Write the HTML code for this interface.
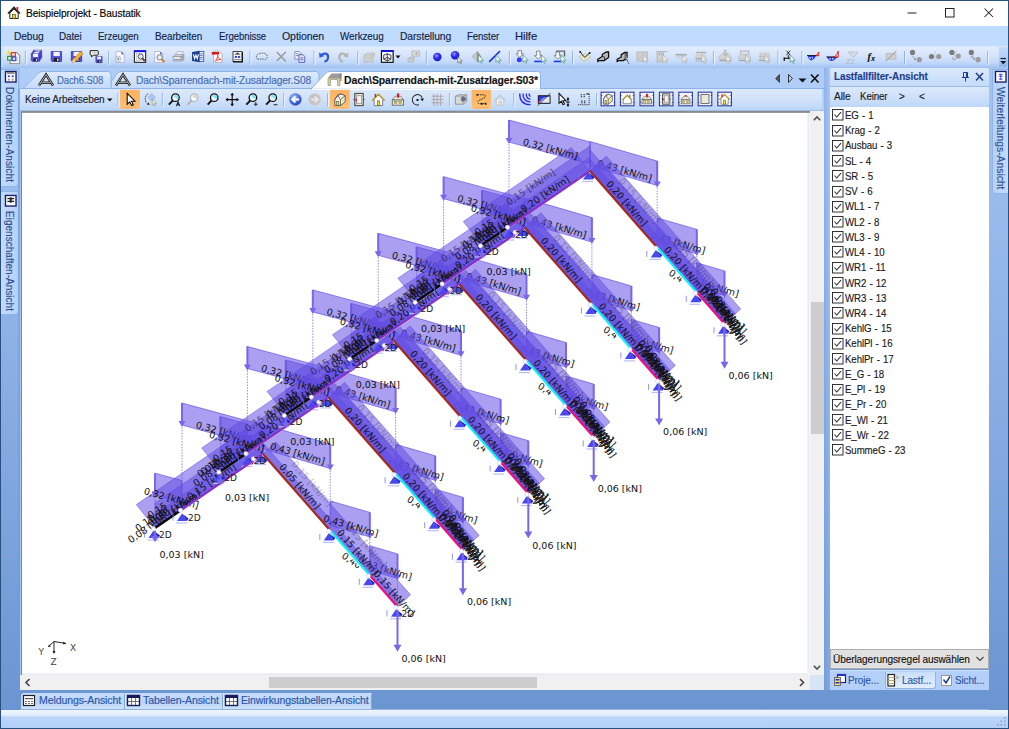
<!DOCTYPE html>
<html><head><meta charset="utf-8"><title>Beispielprojekt - Baustatik</title>
<style>
html,body{margin:0;padding:0;background:#fff;}
#root{position:relative;width:1009px;height:729px;overflow:hidden;font-family:"Liberation Sans",sans-serif;}
.t{position:absolute;white-space:nowrap;transform-origin:0 0;display:inline-block;}
svg{overflow:visible}
svg text{font-family:"Liberation Sans",sans-serif;}
svg.dr text{font-family:"DejaVu Sans","Liberation Sans",sans-serif;}
</style></head><body><div id="root">
<div style="position:absolute;left:0px;top:0px;width:1009px;height:729px;background:#27507f;"></div>
<div style="position:absolute;left:1px;top:1px;width:1007px;height:25px;background:#ffffff;"></div>
<div style="position:absolute;left:1px;top:26px;width:1007px;height:20px;background:#bfdbff;"></div>
<div style="position:absolute;left:1px;top:46px;width:1007px;height:22px;background:linear-gradient(#d9e7fb 0%,#cfe0f9 45%,#b7d2f6 100%);"></div>
<div style="position:absolute;left:1px;top:67px;width:1007px;height:1px;background:#a3c2ee;"></div>
<div style="position:absolute;left:1px;top:68px;width:1007px;height:642px;background:linear-gradient(#a9c8f4 0%,#8db1e6 45%,#6b95d1 100%);"></div>
<div style="position:absolute;left:1px;top:710px;width:1007px;height:18px;background:linear-gradient(#eef5fe 0%,#dfebfc 30%,#bbd5f9 40%,#b2cff8 100%);"></div>
<div style="position:absolute;left:1px;top:709px;width:1007px;height:1px;background:#8fb3e3;"></div>
<span class="t" style="left:26.0px;top:9.1px;font-size:10.3px;line-height:10.3px;color:#000;letter-spacing:-0.1px;-webkit-text-stroke:0.14px #000;transform:scaleX(0.990);">Beispielprojekt - Baustatik</span>
<svg style="position:absolute;left:900px;top:1px" width="108" height="25" viewBox="0 0 108 25"><path d="M7.500 12H16.500" stroke="#222" stroke-width="1" fill="none"/><rect x="45.500" y="7.500" width="8.500" height="8.500" stroke="#222" stroke-width="1" fill="none"/><path d="M84.500 7.500L93 16M93 7.500L84.500 16" stroke="#222" stroke-width="1.050" fill="none"/></svg>
<svg style="position:absolute;left:7px;top:6px" width="14" height="14" viewBox="0 0 14 14"><path d="M1 7.5L7 1.5L13 7.5" stroke="#222" stroke-width="1.6" fill="none"/><rect x="9.5" y="1" width="1.8" height="3.5" fill="#e02020"/><path d="M2.8 7V12.5H11.2V7L7 3Z" fill="#fffbe0" stroke="#222" stroke-width="1"/><rect x="5.6" y="8.5" width="2.8" height="4" fill="#e8d020" stroke="#333" stroke-width=".6"/></svg>
<span class="t" style="left:13.5px;top:32.1px;font-size:10.3px;line-height:10.3px;color:#15233f;letter-spacing:-0.1px;-webkit-text-stroke:0.14px #15233f;transform:scaleX(0.991);">Debug</span>
<span class="t" style="left:59.0px;top:32.1px;font-size:10.3px;line-height:10.3px;color:#15233f;letter-spacing:-0.1px;-webkit-text-stroke:0.14px #15233f;transform:scaleX(0.960);">Datei</span>
<span class="t" style="left:98.0px;top:32.1px;font-size:10.3px;line-height:10.3px;color:#15233f;letter-spacing:-0.1px;-webkit-text-stroke:0.14px #15233f;transform:scaleX(0.938);">Erzeugen</span>
<span class="t" style="left:155.0px;top:32.1px;font-size:10.3px;line-height:10.3px;color:#15233f;letter-spacing:-0.1px;-webkit-text-stroke:0.14px #15233f;transform:scaleX(0.965);">Bearbeiten</span>
<span class="t" style="left:218.5px;top:32.1px;font-size:10.3px;line-height:10.3px;color:#15233f;letter-spacing:-0.1px;-webkit-text-stroke:0.14px #15233f;transform:scaleX(0.932);">Ergebnisse</span>
<span class="t" style="left:282.0px;top:32.1px;font-size:10.3px;line-height:10.3px;color:#15233f;letter-spacing:-0.1px;-webkit-text-stroke:0.14px #15233f;transform:scaleX(1.027);">Optionen</span>
<span class="t" style="left:340.0px;top:32.1px;font-size:10.3px;line-height:10.3px;color:#15233f;letter-spacing:-0.1px;-webkit-text-stroke:0.14px #15233f;transform:scaleX(0.961);">Werkzeug</span>
<span class="t" style="left:400.0px;top:32.1px;font-size:10.3px;line-height:10.3px;color:#15233f;letter-spacing:-0.1px;-webkit-text-stroke:0.14px #15233f;transform:scaleX(1.002);">Darstellung</span>
<span class="t" style="left:467.0px;top:32.1px;font-size:10.3px;line-height:10.3px;color:#15233f;letter-spacing:-0.1px;-webkit-text-stroke:0.14px #15233f;transform:scaleX(0.938);">Fenster</span>
<span class="t" style="left:515.0px;top:32.1px;font-size:10.3px;line-height:10.3px;color:#15233f;letter-spacing:-0.1px;-webkit-text-stroke:0.14px #15233f;transform:scaleX(1.099);">Hilfe</span>
<div style="position:absolute;left:1px;top:68px;width:19px;height:642px;background:linear-gradient(#a4c4f1 0%,#8cb0e5 45%,#6b95d1 100%);"></div>
<div style="position:absolute;left:1px;top:69px;width:18px;height:118px;background:linear-gradient(90deg,#c3dafb,#b6d1f8);border:1px solid #8fb4e8;border-left:none;border-radius:0 0 4px 0;box-sizing:border-box;"></div>
<div style="position:absolute;left:1px;top:191px;width:18px;height:124px;background:linear-gradient(90deg,#c3dafb,#b6d1f8);border:1px solid #8fb4e8;border-left:none;border-radius:0 0 4px 0;box-sizing:border-box;"></div>
<svg style="position:absolute;left:4.5px;top:71px" width="11.5" height="11.5" viewBox="0 0 12 12"><rect x=".5" y=".5" width="11" height="11" fill="#fff" stroke="#1a1a6a" stroke-width="1.4"/><rect x="2" y="1.5" width="8" height="1.2" fill="#444"/><rect x="3" y="4.5" width="2" height="2" fill="#3a4ae0"/><rect x="7" y="4.5" width="2" height="2" fill="#3a4ae0"/><rect x="3" y="8" width="2" height="2" fill="#999"/><rect x="7" y="8" width="2" height="2" fill="#999"/></svg>
<svg style="position:absolute;left:4.5px;top:195px" width="11.5" height="11.5" viewBox="0 0 12 12"><rect x=".5" y=".5" width="11" height="11" fill="#fff" stroke="#1a1a6a" stroke-width="1.4"/><rect x="2.5" y="3" width="7" height="1.4" fill="#222"/><rect x="2.5" y="6" width="7" height="1.4" fill="#222"/><rect x="5" y="2.5" width="2" height="5.5" fill="#222"/></svg>
<span class="t" style="left:15px;top:87px;font-size:10.3px;line-height:11px;color:#2a4f8f;-webkit-text-stroke:0.12px #2a4f8f;transform:rotate(90deg) scaleX(0.994);">Dokumenten-Ansicht</span>
<span class="t" style="left:15px;top:211px;font-size:10.3px;line-height:11px;color:#2a4f8f;-webkit-text-stroke:0.12px #2a4f8f;transform:rotate(90deg) scaleX(0.976);">Eigenschaften-Ansicht</span>
<div style="position:absolute;left:20px;top:68px;width:805px;height:21px;background:#afcdf6;"></div>
<div style="position:absolute;left:20px;top:88px;width:805px;height:1px;background:#8eb3e8;"></div>
<div style="position:absolute;left:20px;top:89px;width:802px;height:21px;background:linear-gradient(#dce9fb 0%,#d0e1fa 50%,#bdd7f8 100%);border-radius:0 0 3px 0;"></div>
<div style="position:absolute;left:822px;top:89px;width:3px;height:22px;background:#b3cff6;"></div>
<div style="position:absolute;left:20px;top:110px;width:805px;height:1px;background:#9fbfee;"></div>
<div style="position:absolute;left:20px;top:111px;width:790px;height:564px;background:#fff;"></div>
<div style="position:absolute;left:21px;top:111px;width:789px;height:1px;background:#8a8a8a;"></div>
<div style="position:absolute;left:21px;top:112px;width:789px;height:1px;background:#9a9a9a;"></div>
<div style="position:absolute;left:18px;top:89px;width:2px;height:601px;background:rgba(110,155,225,.55);"></div>
<div style="position:absolute;left:20px;top:111px;width:1px;height:564px;background:#a9c3ea;"></div>
<div style="position:absolute;left:21px;top:111px;width:1px;height:564px;background:#858585;"></div>
<div style="position:absolute;left:807px;top:113px;width:1px;height:561px;background:#f3f3f3;"></div>
<div style="position:absolute;left:808px;top:113px;width:1px;height:561px;background:#e3ecf7;"></div>
<div style="position:absolute;left:809px;top:113px;width:1px;height:561px;background:#f6f6f6;"></div>
<div style="position:absolute;left:22px;top:673px;width:786px;height:1px;background:#f0f0f0;"></div>
<div style="position:absolute;left:22px;top:674px;width:786px;height:1px;background:#e3ecf7;"></div>
<div style="position:absolute;left:810px;top:111px;width:14px;height:564px;background:#f0f0f0;"></div>
<div style="position:absolute;left:811px;top:302px;width:13px;height:132px;background:#cdcdcd;"></div>
<svg style="position:absolute;left:810px;top:111px" width="14" height="564" viewBox="0 0 14 564"><path d="M3.800 9.300L7 6L10.200 9.300" stroke="#505050" stroke-width="1.600" fill="none"/><path d="M3.800 554.700L7 558L10.200 554.700" stroke="#505050" stroke-width="1.600" fill="none"/></svg>
<div style="position:absolute;left:20px;top:675px;width:790px;height:15px;background:#f0f0f0;"></div>
<div style="position:absolute;left:269px;top:677px;width:268px;height:11px;background:#cdcdcd;"></div>
<svg style="position:absolute;left:20px;top:675px" width="790" height="15" viewBox="0 0 790 15"><path d="M9.5 4L6 7.5L9.5 11" stroke="#444" stroke-width="1.6" fill="none"/><path d="M780 4L783.5 7.5L780 11" stroke="#444" stroke-width="1.6" fill="none"/></svg>
<div style="position:absolute;left:810px;top:675px;width:14px;height:15px;background:#d7e4f4;"></div>
<div style="position:absolute;left:824px;top:68px;width:6px;height:622px;background:linear-gradient(90deg,rgba(120,160,225,.55),rgba(170,200,245,.35));"></div>
<svg style="position:absolute;left:20px;top:68px" width="805" height="22" viewBox="0 0 805 22"><defs><linearGradient id="gtab" x1="0" y1="0" x2="0" y2="1"><stop offset="0" stop-color="#deebfc"/><stop offset="1" stop-color="#c3daf9"/></linearGradient></defs><path d="M91 14L97 5.500Q98.500 3.500 101.500 3.500H296Q299 3.500 299 6.500V20.500H91Z" fill="url(#gtab)" stroke="#8fb4e8"/><path d="M3 20.500L18.500 5Q20 3.500 23 3.500H88Q91 3.500 91 6.500V20.500Z" fill="url(#gtab)" stroke="#8fb4e8"/><path d="M291 21L305.500 5.500Q307 3.500 310 3.500H517.500Q520.500 3.500 520.500 6.500V21Z" fill="#ffffff" stroke="#8fb4e8"/><rect x="292" y="20.500" width="228" height="1.500" fill="#fff"/><g fill="none" stroke-linejoin="miter"><path d="M19 17.500L26 6.500L33 17.500M21.500 14.700H30.500" stroke="#1a1a1a" stroke-width="2.400"/><path d="M19 17.500L26 6.500L33 17.500M21.500 14.700H30.500" stroke="#c8c8c8" stroke-width=".9"/><path d="M96 17.500L103 6.500L110 17.500M98.500 14.700H107.500" stroke="#1a1a1a" stroke-width="2.400"/><path d="M96 17.500L103 6.500L110 17.500M98.500 14.700H107.500" stroke="#c8c8c8" stroke-width=".9"/></g><path d="M308 10L311.500 5.500H321L320 10Z" fill="#9a9a9a"/><path d="M308 10H320V17.500H317.500V11.500H310.500V17.500H308Z" fill="#d8cfa4" stroke="#8a8468" stroke-width=".6"/><path d="M320 10L321 5.500V13" stroke="#777" stroke-width="1" fill="none"/><path d="M759.500 6.500L755.500 10.500L759.500 14.500Z" fill="#555" stroke="#333" stroke-width=".8"/><path d="M768.500 6.500L772.500 10.500L768.500 14.500Z" fill="none" stroke="#333" stroke-width="1"/><path d="M778.500 10.500H786.500L782.500 14.500Z" fill="#111"/><path d="M791 6.500L798.500 14.500M798.500 6.500L791 14.500" stroke="#111" stroke-width="1.6" fill="none"/></svg>
<span class="t" style="left:56.5px;top:76.1px;font-size:10.3px;line-height:10.3px;color:#4169b8;letter-spacing:-0.1px;-webkit-text-stroke:0.14px #4169b8;transform:scaleX(0.921);">Dach6.S08</span>
<span class="t" style="left:136.0px;top:76.1px;font-size:10.3px;line-height:10.3px;color:#4169b8;letter-spacing:-0.1px;-webkit-text-stroke:0.14px #4169b8;transform:scaleX(0.988);">Dach\Sparrendach-mit-Zusatzlager.S08</span>
<span class="t" style="left:343.6px;top:76.1px;font-size:10.3px;line-height:10.3px;font-weight:bold;color:#111;letter-spacing:-0.1px;-webkit-text-stroke:0.14px #111;transform:scaleX(1.013);">Dach\Sparrendach-mit-Zusatzlager.S03*</span>
<span class="t" style="left:24.8px;top:95.3px;font-size:10.3px;line-height:10.3px;color:#1c1c1c;letter-spacing:-0.1px;-webkit-text-stroke:0.14px #1c1c1c;transform:scaleX(0.972);">Keine Arbeitseben</span>
<svg style="position:absolute;left:106px;top:97px" width="8" height="6" viewBox="0 0 8 6"><path d="M1 1.500H6.500L3.750 4.500Z" fill="#111"/></svg>
<div style="position:absolute;left:21px;top:693px;width:351px;height:16px;background:linear-gradient(#c6dcfb,#bad5fa 60%,#cfe2fc);border-radius:3px 0 0 0;"></div>
<div style="position:absolute;left:124px;top:694px;width:1px;height:15px;background:#7ea6de;"></div>
<div style="position:absolute;left:125px;top:694px;width:1px;height:15px;background:#e4effd;"></div>
<div style="position:absolute;left:222px;top:694px;width:1px;height:15px;background:#7ea6de;"></div>
<div style="position:absolute;left:223px;top:694px;width:1px;height:15px;background:#e4effd;"></div>
<div style="position:absolute;left:371px;top:694px;width:1px;height:15px;background:#7ea6de;"></div>
<svg style="position:absolute;left:21px;top:693px" width="352" height="16" viewBox="0 0 352 16"><rect x="2.500" y="2.500" width="11" height="10" fill="#fff" stroke="#222" stroke-width="1.2"/><rect x="4" y="5" width="8" height="1.200" fill="#555"/><path d="M4 8.500H12M4 10.500H12" stroke="#777" stroke-width="1" stroke-dasharray="2 1"/><g transform="translate(104,0)"><rect x="2.500" y="2.500" width="12" height="10" fill="#fff" stroke="#1a1a5a" stroke-width="1.400"/><rect x="3" y="3" width="11" height="2" fill="#1a1a5a"/><path d="M6.500 5V12M10.500 5V12M3 8.500H14" stroke="#555" stroke-width=".8"/></g><g transform="translate(202,0)"><rect x="2.500" y="2.500" width="12" height="10" fill="#fff" stroke="#1a1a5a" stroke-width="1.400"/><rect x="3" y="3" width="11" height="2" fill="#1a1a5a"/><path d="M6.500 5V12M10.500 5V12M3 8.500H14" stroke="#555" stroke-width=".8"/></g></svg>
<span class="t" style="left:38.7px;top:696.1px;font-size:10.3px;line-height:10.3px;color:#2a56a5;letter-spacing:-0.1px;-webkit-text-stroke:0.14px #2a56a5;transform:scaleX(1.023);">Meldungs-Ansicht</span>
<span class="t" style="left:142.8px;top:696.1px;font-size:10.3px;line-height:10.3px;color:#2a56a5;letter-spacing:-0.1px;-webkit-text-stroke:0.14px #2a56a5;transform:scaleX(1.026);">Tabellen-Ansicht</span>
<span class="t" style="left:240.6px;top:696.1px;font-size:10.3px;line-height:10.3px;color:#2a56a5;letter-spacing:-0.1px;-webkit-text-stroke:0.14px #2a56a5;transform:scaleX(1.011);">Einwirkungstabellen-Ansicht</span>
<div style="position:absolute;left:830px;top:68px;width:159px;height:19px;background:linear-gradient(#dbe8fb,#c2dafa);border-radius:2px 2px 0 0;"></div>
<div style="position:absolute;left:830px;top:86px;width:159px;height:1px;background:#9dbdec;"></div>
<div style="position:absolute;left:830px;top:87px;width:159px;height:20px;background:linear-gradient(#dce9fb 0%,#cfe0fa 50%,#bdd7f8 100%);border-radius:0 0 3px 3px;"></div>
<div style="position:absolute;left:830px;top:107px;width:159px;height:542px;background:#fff;"></div>
<span class="t" style="left:834.2px;top:72.1px;font-size:10.3px;line-height:10.3px;font-weight:bold;color:#1f3f8c;letter-spacing:-0.1px;-webkit-text-stroke:0.14px #1f3f8c;transform:scaleX(0.963);">Lastfallfilter-Ansicht</span>
<span class="t" style="left:834.2px;top:91.7px;font-size:10.3px;line-height:10.3px;color:#1c1c1c;letter-spacing:-0.1px;-webkit-text-stroke:0.14px #1c1c1c;transform:scaleX(0.983);">Alle</span>
<span class="t" style="left:860.4px;top:91.7px;font-size:10.3px;line-height:10.3px;color:#1c1c1c;letter-spacing:-0.1px;-webkit-text-stroke:0.14px #1c1c1c;transform:scaleX(0.943);">Keiner</span>
<span class="t" style="left:899.4px;top:91.7px;font-size:10.3px;line-height:10.3px;color:#1c1c1c;letter-spacing:-0.1px;-webkit-text-stroke:0.14px #1c1c1c;transform:scaleX(0.963);">&gt;</span>
<span class="t" style="left:919.4px;top:91.7px;font-size:10.3px;line-height:10.3px;color:#1c1c1c;letter-spacing:-0.1px;-webkit-text-stroke:0.14px #1c1c1c;transform:scaleX(0.963);">&lt;</span>
<svg style="position:absolute;left:958px;top:70px" width="30" height="14" viewBox="0 0 30 14"><path d="M5.500 2.500H9.500V7.500H5.500ZM8.500 2.500V7.500M4 7.500H11M7.500 7.500V11.500" stroke="#1f3f8c" stroke-width="1" fill="none"/><path d="M18 3L25 10.500M25 3L18 10.500" stroke="#1f3f8c" stroke-width="1.500" fill="none"/></svg>
<svg style="position:absolute;left:832px;top:109px" width="12" height="12" viewBox="0 0 12 12"><rect x=".5" y=".5" width="10.500" height="10.500" fill="#fff" stroke="#333"/><path d="M2.500 5.500L4.800 8L9 3.200" stroke="#333" stroke-width="1.100" fill="none"/></svg>
<span class="t" style="left:845.2px;top:111.0px;font-size:10.3px;line-height:10.3px;color:#1a1a1a;letter-spacing:-0.1px;-webkit-text-stroke:0.14px #1a1a1a;transform:scaleX(0.940);word-spacing:0.6px;">EG - 1</span>
<svg style="position:absolute;left:832px;top:125px" width="12" height="12" viewBox="0 0 12 12"><rect x=".5" y=".5" width="10.500" height="10.500" fill="#fff" stroke="#333"/><path d="M2.500 5.500L4.800 8L9 3.200" stroke="#333" stroke-width="1.100" fill="none"/></svg>
<span class="t" style="left:845.2px;top:126.2px;font-size:10.3px;line-height:10.3px;color:#1a1a1a;letter-spacing:-0.1px;-webkit-text-stroke:0.14px #1a1a1a;transform:scaleX(0.940);word-spacing:0.6px;">Krag - 2</span>
<svg style="position:absolute;left:832px;top:140px" width="12" height="12" viewBox="0 0 12 12"><rect x=".5" y=".5" width="10.500" height="10.500" fill="#fff" stroke="#333"/><path d="M2.500 5.500L4.800 8L9 3.200" stroke="#333" stroke-width="1.100" fill="none"/></svg>
<span class="t" style="left:845.2px;top:141.4px;font-size:10.3px;line-height:10.3px;color:#1a1a1a;letter-spacing:-0.1px;-webkit-text-stroke:0.14px #1a1a1a;transform:scaleX(0.940);word-spacing:0.6px;">Ausbau - 3</span>
<svg style="position:absolute;left:832px;top:155px" width="12" height="12" viewBox="0 0 12 12"><rect x=".5" y=".5" width="10.500" height="10.500" fill="#fff" stroke="#333"/><path d="M2.500 5.500L4.800 8L9 3.200" stroke="#333" stroke-width="1.100" fill="none"/></svg>
<span class="t" style="left:845.2px;top:156.7px;font-size:10.3px;line-height:10.3px;color:#1a1a1a;letter-spacing:-0.1px;-webkit-text-stroke:0.14px #1a1a1a;transform:scaleX(0.940);word-spacing:0.6px;">SL - 4</span>
<svg style="position:absolute;left:832px;top:170px" width="12" height="12" viewBox="0 0 12 12"><rect x=".5" y=".5" width="10.500" height="10.500" fill="#fff" stroke="#333"/><path d="M2.500 5.500L4.800 8L9 3.200" stroke="#333" stroke-width="1.100" fill="none"/></svg>
<span class="t" style="left:845.2px;top:171.9px;font-size:10.3px;line-height:10.3px;color:#1a1a1a;letter-spacing:-0.1px;-webkit-text-stroke:0.14px #1a1a1a;transform:scaleX(0.940);word-spacing:0.6px;">SR - 5</span>
<svg style="position:absolute;left:832px;top:186px" width="12" height="12" viewBox="0 0 12 12"><rect x=".5" y=".5" width="10.500" height="10.500" fill="#fff" stroke="#333"/><path d="M2.500 5.500L4.800 8L9 3.200" stroke="#333" stroke-width="1.100" fill="none"/></svg>
<span class="t" style="left:845.2px;top:187.1px;font-size:10.3px;line-height:10.3px;color:#1a1a1a;letter-spacing:-0.1px;-webkit-text-stroke:0.14px #1a1a1a;transform:scaleX(0.940);word-spacing:0.6px;">SV - 6</span>
<svg style="position:absolute;left:832px;top:201px" width="12" height="12" viewBox="0 0 12 12"><rect x=".5" y=".5" width="10.500" height="10.500" fill="#fff" stroke="#333"/><path d="M2.500 5.500L4.800 8L9 3.200" stroke="#333" stroke-width="1.100" fill="none"/></svg>
<span class="t" style="left:845.2px;top:202.4px;font-size:10.3px;line-height:10.3px;color:#1a1a1a;letter-spacing:-0.1px;-webkit-text-stroke:0.14px #1a1a1a;transform:scaleX(0.940);word-spacing:0.6px;">WL1 - 7</span>
<svg style="position:absolute;left:832px;top:216px" width="12" height="12" viewBox="0 0 12 12"><rect x=".5" y=".5" width="10.500" height="10.500" fill="#fff" stroke="#333"/><path d="M2.500 5.500L4.800 8L9 3.200" stroke="#333" stroke-width="1.100" fill="none"/></svg>
<span class="t" style="left:845.2px;top:217.6px;font-size:10.3px;line-height:10.3px;color:#1a1a1a;letter-spacing:-0.1px;-webkit-text-stroke:0.14px #1a1a1a;transform:scaleX(0.940);word-spacing:0.6px;">WL2 - 8</span>
<svg style="position:absolute;left:832px;top:231px" width="12" height="12" viewBox="0 0 12 12"><rect x=".5" y=".5" width="10.500" height="10.500" fill="#fff" stroke="#333"/><path d="M2.500 5.500L4.800 8L9 3.200" stroke="#333" stroke-width="1.100" fill="none"/></svg>
<span class="t" style="left:845.2px;top:232.8px;font-size:10.3px;line-height:10.3px;color:#1a1a1a;letter-spacing:-0.1px;-webkit-text-stroke:0.14px #1a1a1a;transform:scaleX(0.940);word-spacing:0.6px;">WL3 - 9</span>
<svg style="position:absolute;left:832px;top:246px" width="12" height="12" viewBox="0 0 12 12"><rect x=".5" y=".5" width="10.500" height="10.500" fill="#fff" stroke="#333"/><path d="M2.500 5.500L4.800 8L9 3.200" stroke="#333" stroke-width="1.100" fill="none"/></svg>
<span class="t" style="left:845.2px;top:248.1px;font-size:10.3px;line-height:10.3px;color:#1a1a1a;letter-spacing:-0.1px;-webkit-text-stroke:0.14px #1a1a1a;transform:scaleX(0.940);word-spacing:0.6px;">WL4 - 10</span>
<svg style="position:absolute;left:832px;top:262px" width="12" height="12" viewBox="0 0 12 12"><rect x=".5" y=".5" width="10.500" height="10.500" fill="#fff" stroke="#333"/><path d="M2.500 5.500L4.800 8L9 3.200" stroke="#333" stroke-width="1.100" fill="none"/></svg>
<span class="t" style="left:845.2px;top:263.3px;font-size:10.3px;line-height:10.3px;color:#1a1a1a;letter-spacing:-0.1px;-webkit-text-stroke:0.14px #1a1a1a;transform:scaleX(0.940);word-spacing:0.6px;">WR1 - 11</span>
<svg style="position:absolute;left:832px;top:277px" width="12" height="12" viewBox="0 0 12 12"><rect x=".5" y=".5" width="10.500" height="10.500" fill="#fff" stroke="#333"/><path d="M2.500 5.500L4.800 8L9 3.200" stroke="#333" stroke-width="1.100" fill="none"/></svg>
<span class="t" style="left:845.2px;top:278.5px;font-size:10.3px;line-height:10.3px;color:#1a1a1a;letter-spacing:-0.1px;-webkit-text-stroke:0.14px #1a1a1a;transform:scaleX(0.940);word-spacing:0.6px;">WR2 - 12</span>
<svg style="position:absolute;left:832px;top:292px" width="12" height="12" viewBox="0 0 12 12"><rect x=".5" y=".5" width="10.500" height="10.500" fill="#fff" stroke="#333"/><path d="M2.500 5.500L4.800 8L9 3.200" stroke="#333" stroke-width="1.100" fill="none"/></svg>
<span class="t" style="left:845.2px;top:293.7px;font-size:10.3px;line-height:10.3px;color:#1a1a1a;letter-spacing:-0.1px;-webkit-text-stroke:0.14px #1a1a1a;transform:scaleX(0.940);word-spacing:0.6px;">WR3 - 13</span>
<svg style="position:absolute;left:832px;top:307px" width="12" height="12" viewBox="0 0 12 12"><rect x=".5" y=".5" width="10.500" height="10.500" fill="#fff" stroke="#333"/><path d="M2.500 5.500L4.800 8L9 3.200" stroke="#333" stroke-width="1.100" fill="none"/></svg>
<span class="t" style="left:845.2px;top:309.0px;font-size:10.3px;line-height:10.3px;color:#1a1a1a;letter-spacing:-0.1px;-webkit-text-stroke:0.14px #1a1a1a;transform:scaleX(0.940);word-spacing:0.6px;">WR4 - 14</span>
<svg style="position:absolute;left:832px;top:323px" width="12" height="12" viewBox="0 0 12 12"><rect x=".5" y=".5" width="10.500" height="10.500" fill="#fff" stroke="#333"/><path d="M2.500 5.500L4.800 8L9 3.200" stroke="#333" stroke-width="1.100" fill="none"/></svg>
<span class="t" style="left:845.2px;top:324.2px;font-size:10.3px;line-height:10.3px;color:#1a1a1a;letter-spacing:-0.1px;-webkit-text-stroke:0.14px #1a1a1a;transform:scaleX(0.940);word-spacing:0.6px;">KehlG - 15</span>
<svg style="position:absolute;left:832px;top:338px" width="12" height="12" viewBox="0 0 12 12"><rect x=".5" y=".5" width="10.500" height="10.500" fill="#fff" stroke="#333"/><path d="M2.500 5.500L4.800 8L9 3.200" stroke="#333" stroke-width="1.100" fill="none"/></svg>
<span class="t" style="left:845.2px;top:339.4px;font-size:10.3px;line-height:10.3px;color:#1a1a1a;letter-spacing:-0.1px;-webkit-text-stroke:0.14px #1a1a1a;transform:scaleX(0.940);word-spacing:0.6px;">KehlPl - 16</span>
<svg style="position:absolute;left:832px;top:353px" width="12" height="12" viewBox="0 0 12 12"><rect x=".5" y=".5" width="10.500" height="10.500" fill="#fff" stroke="#333"/><path d="M2.500 5.500L4.800 8L9 3.200" stroke="#333" stroke-width="1.100" fill="none"/></svg>
<span class="t" style="left:845.2px;top:354.7px;font-size:10.3px;line-height:10.3px;color:#1a1a1a;letter-spacing:-0.1px;-webkit-text-stroke:0.14px #1a1a1a;transform:scaleX(0.940);word-spacing:0.6px;">KehlPr - 17</span>
<svg style="position:absolute;left:832px;top:368px" width="12" height="12" viewBox="0 0 12 12"><rect x=".5" y=".5" width="10.500" height="10.500" fill="#fff" stroke="#333"/><path d="M2.500 5.500L4.800 8L9 3.200" stroke="#333" stroke-width="1.100" fill="none"/></svg>
<span class="t" style="left:845.2px;top:369.9px;font-size:10.3px;line-height:10.3px;color:#1a1a1a;letter-spacing:-0.1px;-webkit-text-stroke:0.14px #1a1a1a;transform:scaleX(0.940);word-spacing:0.6px;">E_G - 18</span>
<svg style="position:absolute;left:832px;top:384px" width="12" height="12" viewBox="0 0 12 12"><rect x=".5" y=".5" width="10.500" height="10.500" fill="#fff" stroke="#333"/><path d="M2.500 5.500L4.800 8L9 3.200" stroke="#333" stroke-width="1.100" fill="none"/></svg>
<span class="t" style="left:845.2px;top:385.1px;font-size:10.3px;line-height:10.3px;color:#1a1a1a;letter-spacing:-0.1px;-webkit-text-stroke:0.14px #1a1a1a;transform:scaleX(0.940);word-spacing:0.6px;">E_Pl - 19</span>
<svg style="position:absolute;left:832px;top:399px" width="12" height="12" viewBox="0 0 12 12"><rect x=".5" y=".5" width="10.500" height="10.500" fill="#fff" stroke="#333"/><path d="M2.500 5.500L4.800 8L9 3.200" stroke="#333" stroke-width="1.100" fill="none"/></svg>
<span class="t" style="left:845.2px;top:400.4px;font-size:10.3px;line-height:10.3px;color:#1a1a1a;letter-spacing:-0.1px;-webkit-text-stroke:0.14px #1a1a1a;transform:scaleX(0.940);word-spacing:0.6px;">E_Pr - 20</span>
<svg style="position:absolute;left:832px;top:414px" width="12" height="12" viewBox="0 0 12 12"><rect x=".5" y=".5" width="10.500" height="10.500" fill="#fff" stroke="#333"/><path d="M2.500 5.500L4.800 8L9 3.200" stroke="#333" stroke-width="1.100" fill="none"/></svg>
<span class="t" style="left:845.2px;top:415.6px;font-size:10.3px;line-height:10.3px;color:#1a1a1a;letter-spacing:-0.1px;-webkit-text-stroke:0.14px #1a1a1a;transform:scaleX(0.940);word-spacing:0.6px;">E_Wl - 21</span>
<svg style="position:absolute;left:832px;top:429px" width="12" height="12" viewBox="0 0 12 12"><rect x=".5" y=".5" width="10.500" height="10.500" fill="#fff" stroke="#333"/><path d="M2.500 5.500L4.800 8L9 3.200" stroke="#333" stroke-width="1.100" fill="none"/></svg>
<span class="t" style="left:845.2px;top:430.8px;font-size:10.3px;line-height:10.3px;color:#1a1a1a;letter-spacing:-0.1px;-webkit-text-stroke:0.14px #1a1a1a;transform:scaleX(0.940);word-spacing:0.6px;">E_Wr - 22</span>
<svg style="position:absolute;left:832px;top:444px" width="12" height="12" viewBox="0 0 12 12"><rect x=".5" y=".5" width="10.500" height="10.500" fill="#fff" stroke="#333"/><path d="M2.500 5.500L4.800 8L9 3.200" stroke="#333" stroke-width="1.100" fill="none"/></svg>
<span class="t" style="left:845.2px;top:446.0px;font-size:10.3px;line-height:10.3px;color:#1a1a1a;letter-spacing:-0.1px;-webkit-text-stroke:0.14px #1a1a1a;transform:scaleX(0.940);word-spacing:0.6px;">SummeG - 23</span>
<div style="position:absolute;left:830px;top:649px;width:159px;height:20px;background:#e1e1e1;border:1px solid #adadad;box-sizing:border-box;"></div>
<span class="t" style="left:833.1px;top:654.9px;font-size:10.3px;line-height:10.3px;color:#111;letter-spacing:-0.1px;-webkit-text-stroke:0.14px #111;transform:scaleX(0.979);">Überlagerungsregel auswählen</span>
<svg style="position:absolute;left:975px;top:655px" width="10" height="8" viewBox="0 0 10 8"><path d="M1.500 2L5 5.500L8.500 2" stroke="#444" stroke-width="1.100" fill="none"/></svg>
<div style="position:absolute;left:830px;top:670px;width:159px;height:20px;background:#b4d0f8;"></div>
<div style="position:absolute;left:830px;top:670px;width:159px;height:1px;background:#cfe1fb;"></div>
<div style="position:absolute;left:885px;top:672px;width:51px;height:17px;background:linear-gradient(#c9defb,#e3eefd);border:1px solid #8fb4e8;border-top:none;border-radius:0 0 3px 3px;box-sizing:border-box;"></div>
<svg style="position:absolute;left:830px;top:671px" width="159" height="18" viewBox="0 0 159 18"><rect x="7.500" y="3.500" width="8" height="8" fill="#fff" stroke="#22227a" stroke-width="1.200"/><rect x="7" y="3" width="9" height="2" fill="#3030c0"/><rect x="4.500" y="6.500" width="6" height="8" fill="#f4e070" stroke="#555" stroke-width=".8"/><rect x="5.500" y="8" width="4" height="1.500" fill="#3030c0"/><rect x="5.500" y="11" width="4" height="1.500" fill="#3030c0"/><rect x="58" y="3.500" width="6.500" height="11.500" fill="#fff" stroke="#222" stroke-width="1.200"/><path d="M58 6.500H64.500M58 9.500H64.500M58 12.500H64.500" stroke="#b9a96a" stroke-width="1.200"/><path d="M66 5L69 6.500L66 8" fill="#c8c8a0" stroke="#999" stroke-width=".5"/><rect x="111.500" y="4.500" width="10" height="10" fill="#fff" stroke="#999" stroke-width="1"/><path d="M113.500 8.500L116 12L120 5.500" stroke="#223a8a" stroke-width="1.500" fill="none"/></svg>
<span class="t" style="left:848.0px;top:676.0px;font-size:10.3px;line-height:10.3px;color:#2a56a5;letter-spacing:-0.1px;-webkit-text-stroke:0.14px #2a56a5;transform:scaleX(0.968);">Proje...</span>
<span class="t" style="left:901.5px;top:676.0px;font-size:10.3px;line-height:10.3px;color:#2a56a5;letter-spacing:-0.1px;-webkit-text-stroke:0.14px #2a56a5;transform:scaleX(0.966);">Lastf...</span>
<span class="t" style="left:955.0px;top:676.0px;font-size:10.3px;line-height:10.3px;color:#2a56a5;letter-spacing:-0.1px;-webkit-text-stroke:0.14px #2a56a5;transform:scaleX(0.958);">Sicht...</span>
<div style="position:absolute;left:989px;top:68px;width:3px;height:642px;background:linear-gradient(#a4c4f1 0%,#8cb0e5 45%,#6b95d1 100%);"></div>
<div style="position:absolute;left:991px;top:68px;width:17px;height:642px;background:linear-gradient(#a4c4f1 0%,#8cb0e5 45%,#6b95d1 100%);"></div>
<div style="position:absolute;left:992px;top:69px;width:16px;height:125px;background:linear-gradient(90deg,#b6d1f8,#c3dafb);border:1px solid #8fb4e8;border-right:none;border-radius:0 0 0 4px;box-sizing:border-box;"></div>
<svg style="position:absolute;left:995px;top:71px" width="11.5" height="11.5" viewBox="0 0 12 12"><rect x=".5" y=".5" width="11" height="11" fill="#fff" stroke="#1a1a6a" stroke-width="1.400"/><path d="M4 3.500H8M4 5.500H8M4 8.500H8" stroke="#3a4ae0" stroke-width="1"/><path d="M6 3V9.500" stroke="#3a4ae0" stroke-width="1"/></svg>
<span class="t" style="left:1005.8px;top:86.5px;font-size:10.3px;line-height:11px;color:#2a4f8f;-webkit-text-stroke:0.12px #2a4f8f;transform:rotate(90deg) scaleX(1.002);">Weiterleitungs-Ansicht</span>
<svg style="position:absolute;left:996px;top:716px" width="11" height="11" viewBox="0 0 11 11"><g fill="#8b9dbc"><rect x="8" y="1" width="1.500" height="1.500"/><rect x="4.500" y="4.500" width="1.500" height="1.500"/><rect x="8" y="4.500" width="1.500" height="1.500"/><rect x="1" y="8" width="1.500" height="1.500"/><rect x="4.500" y="8" width="1.500" height="1.500"/><rect x="8" y="8" width="1.500" height="1.500"/></g></svg>
<div style="position:absolute;left:3px;top:47px;width:996px;height:20px;background:linear-gradient(#e3edfc 0%,#d6e5fb 40%,#c4daf9 75%,#a6c6f3 100%);border-radius:3px 3px 4px 3px;"></div>
<div style="position:absolute;left:999px;top:47px;width:9px;height:20px;background:linear-gradient(#c3dafa 0%,#b4d0f7 50%,#8fb5ea 100%);border-radius:0 3px 3px 0;"></div>
<svg style="position:absolute;left:0;top:46px" width="1009" height="66" viewBox="0 46 1009 66" fill="none">
<defs><radialGradient id="gsph" cx=".4" cy=".35" r=".7"><stop offset="0" stop-color="#9a9aff"/><stop offset=".45" stop-color="#3030f4"/><stop offset="1" stop-color="#1010c8"/></radialGradient><radialGradient id="gbk" cx=".4" cy=".35" r=".7"><stop offset="0" stop-color="#b8d0ff"/><stop offset=".6" stop-color="#3a6ae0"/><stop offset="1" stop-color="#1a3aa0"/></radialGradient></defs>
<path d="M25.4 51V64" stroke="#8fb2e6" stroke-width="1"/><path d="M26.4 52V65" stroke="#eef4fd" stroke-width="1"/>
<path d="M108.7 51V64" stroke="#8fb2e6" stroke-width="1"/><path d="M109.7 52V65" stroke="#eef4fd" stroke-width="1"/>
<path d="M250.0 51V64" stroke="#8fb2e6" stroke-width="1"/><path d="M251.0 52V65" stroke="#eef4fd" stroke-width="1"/>
<path d="M314.0 51V64" stroke="#8fb2e6" stroke-width="1"/><path d="M315.0 52V65" stroke="#eef4fd" stroke-width="1"/>
<path d="M357.8 51V64" stroke="#8fb2e6" stroke-width="1"/><path d="M358.8 52V65" stroke="#eef4fd" stroke-width="1"/>
<path d="M426.4 51V64" stroke="#8fb2e6" stroke-width="1"/><path d="M427.4 52V65" stroke="#eef4fd" stroke-width="1"/>
<path d="M509.4 51V64" stroke="#8fb2e6" stroke-width="1"/><path d="M510.4 52V65" stroke="#eef4fd" stroke-width="1"/>
<path d="M572.6 51V64" stroke="#8fb2e6" stroke-width="1"/><path d="M573.6 52V65" stroke="#eef4fd" stroke-width="1"/>
<path d="M713.4 51V64" stroke="#8fb2e6" stroke-width="1"/><path d="M714.4 52V65" stroke="#eef4fd" stroke-width="1"/>
<path d="M778.0 51V64" stroke="#8fb2e6" stroke-width="1"/><path d="M779.0 52V65" stroke="#eef4fd" stroke-width="1"/>
<path d="M802.0 51V64" stroke="#8fb2e6" stroke-width="1"/><path d="M803.0 52V65" stroke="#eef4fd" stroke-width="1"/>
<path d="M904.5 51V64" stroke="#8fb2e6" stroke-width="1"/><path d="M905.5 52V65" stroke="#eef4fd" stroke-width="1"/>
<path d="M987.7 51V64" stroke="#8fb2e6" stroke-width="1"/><path d="M988.7 52V65" stroke="#eef4fd" stroke-width="1"/>
<g transform="translate(5.5,49.3) scale(0.9)"><g transform="translate(-0.9,-0.9) scale(1.11)"><path d="M5.500 4H12L15 7V15H5.500Z" fill="#f6f6f6" stroke="#8e8e8e" stroke-width="1.100"/><path d="M6.500 15.700H15.500" stroke="#c0c0c0"/><path d="M12.500 9V13.500" stroke="#d0d0d0"/><rect x="7" y="4.200" width="3.600" height="3.600" fill="#fff" stroke="#d23030" stroke-width="1.200"/><rect x="3" y="8" width="3.600" height="3.600" fill="#fff" stroke="#2a9a2a" stroke-width="1.200"/><rect x="7.500" y="8.500" width="3.600" height="3.600" fill="#dfe4ff" stroke="#3a4ad0" stroke-width="1.200"/><path d="M4 1L4.800 3.200L7 3.400L5.200 4.700L5.800 7L4 5.600L2.200 7L2.800 4.700L1 3.400L3.200 3.200Z" fill="#f2de30"/></g></g>
<g transform="translate(29.8,49.3) scale(0.9)"><g transform="translate(2.500,-1) scale(.8)"><path d="M2 2.500H13.500V13.500H3L2 12.500Z" fill="#5452da" stroke="#2e2ea2" stroke-width=".8"/><rect x="4.500" y="2.800" width="7" height="4.700" fill="#f2f2fa"/><rect x="5" y="9.500" width="6" height="4" fill="#222"/><rect x="8.500" y="10.300" width="1.600" height="2.600" fill="#ddd"/></g><g transform="translate(1.200,0.800) scale(.8)"><path d="M2 2.500H13.500V13.500H3L2 12.500Z" fill="#5452da" stroke="#2e2ea2" stroke-width=".8"/><rect x="4.500" y="2.800" width="7" height="4.700" fill="#f2f2fa"/><rect x="5" y="9.500" width="6" height="4" fill="#222"/><rect x="8.500" y="10.300" width="1.600" height="2.600" fill="#ddd"/></g><g transform="translate(0,2.600) scale(.8)"><path d="M2 2.500H13.500V13.500H3L2 12.500Z" fill="#5452da" stroke="#2e2ea2" stroke-width=".8"/><rect x="4.500" y="2.800" width="7" height="4.700" fill="#f2f2fa"/><rect x="5" y="9.500" width="6" height="4" fill="#222"/><rect x="8.500" y="10.300" width="1.600" height="2.600" fill="#ddd"/></g></g>
<g transform="translate(49.4,49.3) scale(0.9)"><path d="M2 2.500H13.500V13.500H3L2 12.500Z" fill="#5452da" stroke="#2e2ea2" stroke-width=".8"/><rect x="4.500" y="2.800" width="7" height="4.700" fill="#f2f2fa"/><rect x="5" y="9.500" width="6" height="4" fill="#222"/><rect x="8.500" y="10.300" width="1.600" height="2.600" fill="#ddd"/></g>
<g transform="translate(69.5,49.3) scale(0.9)"><path d="M2 2.500H13.500V13.500H3L2 12.500Z" fill="#5452da" stroke="#2e2ea2" stroke-width=".8"/><rect x="4.500" y="2.800" width="7" height="4.700" fill="#f2f2fa"/><rect x="5" y="9.500" width="6" height="4" fill="#222"/><rect x="8.500" y="10.300" width="1.600" height="2.600" fill="#ddd"/><path d="M3 14.500L4 11L12.500 2.500L15 5L6.500 13.500Z" fill="#f4b43a" stroke="#b8741a" stroke-width=".7"/><path d="M3 14.500L4 11L6.500 13.500Z" fill="#f6e0b0"/></g>
<g transform="translate(88.8,49.3) scale(0.9)"><path d="M1.500 1.500H9.500Q10.500 1.500 10.500 2.500V5.500Q10.500 6.500 9.500 6.500H5L3 8.500V6.500H2.500Q1.500 6.500 1.500 5.500Z" fill="#fff" stroke="#111" stroke-width="1.100"/><path d="M4 4H4.800M5.800 4H6.600M7.600 4H8.400" stroke="#333" stroke-width="1"/><g transform="translate(6.500,6.500) scale(.62)"><path d="M2 2.500H13.500V13.500H3L2 12.500Z" fill="#5452da" stroke="#2e2ea2" stroke-width=".8"/><rect x="4.500" y="2.800" width="7" height="4.700" fill="#f2f2fa"/><rect x="5" y="9.500" width="6" height="4" fill="#222"/><rect x="8.500" y="10.300" width="1.600" height="2.600" fill="#ddd"/></g></g>
<g transform="translate(112.4,49.3) scale(0.9)"><path d="M4 2.500H10L13 5.500V14.500H4Z" fill="#fbfbfd" stroke="#b0b0c8" stroke-width=".9"/><path d="M10 2.500V5.500H13Z" fill="#5a5ac0"/><circle cx="6.500" cy="10.500" r="3" fill="#e6e6ee" stroke="#b8b8c8" stroke-width="1"/><circle cx="6.500" cy="10.500" r="1" fill="#5a8a9a"/></g>
<g transform="translate(132.6,49.3) scale(0.9)"><rect x="2" y="2" width="12.500" height="12.500" fill="#fff" stroke="#222" stroke-width="1.200"/><rect x="1.500" y="1" width="13.500" height="2.200" fill="#1414e8"/><rect x="4" y="4.500" width="6" height="8" fill="#eef2f8" stroke="#aab" stroke-width=".6"/><circle cx="9" cy="8" r="2.800" fill="#d6eef8" stroke="#555" stroke-width="1.100"/><path d="M11 10L13.500 13" stroke="#5a2a10" stroke-width="2"/></g>
<g transform="translate(152.0,49.3) scale(0.9)"><path d="M3 2.500H9L12 5.500V14.500H3Z" fill="#fbfbfd" stroke="#b0b0c8" stroke-width=".9"/><path d="M9 2.500V5.500H12Z" fill="#5a5ac0"/><circle cx="8.500" cy="9" r="3" fill="#e4f2f8" stroke="#777" stroke-width="1.100"/><path d="M10.800 11.200L13.800 14.200" stroke="#d8781a" stroke-width="2.200"/></g>
<g transform="translate(171.3,49.3) scale(0.9)"><path d="M4.500 6L6.500 2.500H13.500L12 6Z" fill="#eef" stroke="#9aa" stroke-width=".7"/><path d="M2 8L4.500 6H14L12 8Z" fill="#d8d8e0" stroke="#889" stroke-width=".7"/><rect x="2" y="8" width="10" height="5" fill="#e8e8ee" stroke="#889" stroke-width=".7"/><path d="M12 8L14 6V11L12 13Z" fill="#b0b0bc" stroke="#889" stroke-width=".7"/><rect x="3" y="11" width="8" height="1.200" fill="#8a8a9a"/><rect x="9.500" y="9" width="1.500" height="1" fill="#3a9a3a"/></g>
<g transform="translate(190.7,49.3) scale(0.9)"><rect x="8" y="2.500" width="6.500" height="11" fill="#fff" stroke="#2a4a9a" stroke-width=".9"/><path d="M10 5H13.500M10 7H13.500M10 9H13.500M10 11H13.500" stroke="#2a4a9a" stroke-width=".8"/><path d="M1.500 3L10 1.500V14.500L1.500 13Z" fill="#1a3f94"/><path d="M3 5.500L4.300 10.500L5.800 6.500L7.300 10.500L8.600 5.500" stroke="#fff" stroke-width="1.200" fill="none"/></g>
<g transform="translate(210.0,49.3) scale(0.9)"><path d="M4 2H10.500L13.500 5V14.500H4Z" fill="#fbfbfb" stroke="#aaa" stroke-width=".9"/><rect x="2" y="3" width="8" height="2.800" fill="#e01414"/><path d="M6 13C7.500 11 9 8 8.500 6.500C8 8.500 10 11 12.500 11.500C10 11 7.500 12 6 13Z" stroke="#e03030" stroke-width="1" fill="none"/></g>
<g transform="translate(230.3,49.3) scale(0.9)"><rect x="3" y="2.500" width="10" height="11" fill="#f6f6f6" stroke="#333" stroke-width="1"/><path d="M3 14H13.500V3" stroke="#111" stroke-width="1.200" fill="none"/><path d="M4.500 6L8 3.200L11.500 6Z" fill="#555"/><rect x="5" y="7.500" width="2.500" height="2" fill="#2a3ad0"/><rect x="8.500" y="7.500" width="2.500" height="2" fill="#2a3ad0"/><path d="M4 11.500H12" stroke="#777"/></g>
<g transform="translate(254.7,49.3) scale(0.9)"><path d="M3.500 11C.5 9 2 5 6 4.500C10 3.500 14 5 14 8C14 11 11 12.500 9.500 11C8 9.500 6 12 3.500 11Z" fill="none" stroke="#555" stroke-width="1.100" stroke-dasharray="1.600 1.200"/></g>
<g transform="translate(274.1,49.3) scale(0.9)"><path d="M3 3L13 13.500M13 3L3 13" stroke="#9a9a9a" stroke-width="1.700"/></g>
<g transform="translate(292.6,49.3) scale(0.9)"><path d="M2.500 2.500H7.500L9.500 4.500V11H2.500Z" fill="#eef0fa" stroke="#7a7aa8" stroke-width=".9"/><path d="M3.800 5H7M3.800 7H7.500" stroke="#4a8a6a" stroke-width=".8"/><path d="M7 6H11.500L13.500 8V14.500H7Z" fill="#dfe3fa" stroke="#4a4ab0" stroke-width=".9"/><path d="M8.500 9.500H12M8.500 11.500H12" stroke="#4a4ab0" stroke-width=".8"/></g>
<g transform="translate(316.8,49.3) scale(0.9)"><path d="M5 6.500C8 3.500 12.500 4.500 12.500 8.500C12.500 11.500 10.500 13.500 8.500 13.500" fill="none" stroke="#2a5ae0" stroke-width="2.600"/><path d="M2.500 3.500L3 9.500L8.500 7.500Z" fill="#2a5ae0"/></g>
<g transform="translate(336.3,49.3) scale(0.9)"><path d="M11 6.500C8 3.500 3.500 4.500 3.500 8.500C3.500 11.500 5.500 13.500 7.500 13.500" fill="none" stroke="#b4b4b4" stroke-width="2.600"/><path d="M13.500 3.500L13 9.500L7.500 7.500Z" fill="#b4b4b4"/></g>
<g transform="translate(362.4,49.3) scale(0.9)"><rect x="2" y="6" width="9.500" height="8" fill="#d4d4d4" stroke="#b8b8b8"/><path d="M5 6V4H10M3.500 9H10M3.500 11.500H10" stroke="#c4c4c4" stroke-width="1"/><path d="M8 3.500H14V9.500L12 7.500L9 10.500L7.500 9L10.500 6Z" fill="#c8c8c8"/></g>
<g transform="translate(380.1,49.3) scale(0.9)"><rect x="1.500" y="1.500" width="13" height="13" fill="#f4f6fa" stroke="#111" stroke-width="1.300"/><rect x="1" y="1" width="14" height="2" fill="#1414e8"/><path d="M8 5L12 6.500V11L8 13L4 11V6.500ZM8 5V9L4 11M8 9L12 11M8 9V13" stroke="#222" stroke-width=".9" fill="none"/></g>
<g transform="translate(406.2,49.3) scale(0.9)"><rect x="6.500" y="2" width="8" height="5.500" fill="#e4e4e4" stroke="#aaa" stroke-width=".9"/><path d="M8.500 4.800H12.500M11 3.500L12.500 4.800L11 6" stroke="#999" stroke-width=".8" fill="none"/><rect x="2" y="10" width="6" height="4" rx="1" fill="#d0d0d0" stroke="#b0b0b0"/><path d="M3 10L4.500 8.500H9V12" stroke="#b8b8b8" fill="none"/></g>
<g transform="translate(430.1,49.3) scale(0.9)"><circle cx="8" cy="8.500" r="4.700" fill="url(#gsph)"/></g>
<g transform="translate(449.2,49.3) scale(0.9)"><circle cx="6.500" cy="6.500" r="4.700" fill="url(#gsph)"/><path d="M9.500 8V15L11.300 13.500L12.500 16L13.600 15.500L12.500 13H14.500Z" fill="#f4f4f4" stroke="#555" stroke-width=".7"/></g>
<g transform="translate(470.2,49.3) scale(0.9)"><path d="M2 8L8 2.500V13.500Z" fill="#c8c8c8" stroke="#999" stroke-width=".6"/><path d="M8 2.500L12 8L8 13.500Z" fill="#a89878" stroke="#888" stroke-width=".6"/><path d="M9 6V14.500L11 12.700L12.300 15.500L13.500 15L12.200 12.300H14.800Z" fill="#f4f4f4" stroke="#3a8f7a" stroke-width=".7"/></g>
<g transform="translate(487.8,49.3) scale(0.9)"><path d="M1.500 14L13.500 2" stroke="#1a3ae0" stroke-width="1.800"/><path d="M9 6V14.500L11 12.700L12.300 15.500L13.500 15L12.200 12.300H14.800Z" fill="#f4f4f4" stroke="#3a8f7a" stroke-width=".7"/></g>
<g transform="translate(514.8,49.3) scale(0.9)"><circle cx="5" cy="11.500" r="2.800" fill="#3a3af4"/><path d="M3.500 1.500H7.500V5H9.500L5.500 9L1.500 5H3.500Z" fill="#f6f6f6" stroke="#666" stroke-width=".8"/><path d="M9 6V14.500L11 12.700L12.300 15.500L13.500 15L12.200 12.300H14.800Z" fill="#f4f4f4" stroke="#3a8f7a" stroke-width=".7"/></g>
<g transform="translate(533.3,49.3) scale(0.9)"><path d="M1 13.500H10" stroke="#1a3ae0" stroke-width="1.800"/><path d="M3.500 2H7.500V7H9.500L5.500 11L1.500 7H3.500Z" fill="#f6f6f6" stroke="#666" stroke-width=".8"/><path d="M9 6V14.500L11 12.700L12.300 15.500L13.500 15L12.200 12.300H14.800Z" fill="#f4f4f4" stroke="#3a8f7a" stroke-width=".7"/></g>
<g transform="translate(552.8,49.3) scale(0.9)"><path d="M1 13.500H10" stroke="#1a3ae0" stroke-width="1.800"/><path d="M3.500 2H13V8" fill="none" stroke="#666" stroke-width="1.600"/><path d="M3.500 3H7.500V7H9.500L5.500 11L1.500 7H3.500Z" fill="#f6f6f6" stroke="#666" stroke-width=".8"/><path d="M9 6V14.500L11 12.700L12.300 15.500L13.500 15L12.200 12.300H14.800Z" fill="#f4f4f4" stroke="#3a8f7a" stroke-width=".7"/></g>
<g transform="translate(577.5,49.3) scale(0.9)"><path d="M2 8L9 4.500L14.500 8.500L7 13.500Z" fill="#e8e4c0" stroke="#b8b490" stroke-width=".7"/><path d="M3 3L8 9L13.500 4" fill="none" stroke="#222" stroke-width="1"/><circle cx="3" cy="3" r="1.100" fill="#111"/><circle cx="13.500" cy="4" r="1.100" fill="#111"/></g>
<g transform="translate(596.0,49.3) scale(0.9)"><path d="M2 11L7 8V5.500L11.500 3H14V9L9 12.500H4L2 13.500Z" fill="#b8b8b8" stroke="#111" stroke-width="1.400"/><path d="M7 8L9.500 8.500V12" stroke="#111" stroke-width=".8" fill="none"/></g>
<g transform="translate(615.8,49.3) scale(0.9)"><path d="M1.500 11L6 8.500V6L10 3.500H12.500V9L8.500 12.500H3.500L1.500 13.500Z" fill="#b8b8b8" stroke="#111" stroke-width="1.400"/><path d="M10.500 4V12L12 10.800L13.300 14" stroke="#111" stroke-width=".8" fill="#f4f4f4"/><path d="M13.500 15.500L14.500 14.500L15 16Z" fill="#111"/></g>
<g transform="translate(635.1,49.3) scale(0.9)"><rect x="2" y="3" width="11.500" height="10" fill="#cfcfcf" stroke="#b4b4b4"/><path d="M3 12L6 8L9 11" stroke="#c0c0c0" fill="none"/><path d="M9 6V14.500L11 12.700L12.300 15.500L13.500 15L12.200 12.300H14.800Z" fill="#ececec" stroke="#aaa" stroke-width=".7"/></g>
<g transform="translate(654.8,49.3) scale(0.9)"><rect x="2.500" y="2.500" width="7" height="11.500" fill="#d0d0d0" stroke="#b4b4b4"/><path d="M2 2.500H14" stroke="#b8b8b8" stroke-width="1.200"/><path d="M5 4V6M7.500 4V6M5 11.500V12.500M7.500 11.500V12.500" stroke="#a8a8a8" stroke-width="1.200"/><path d="M9 6V14.500L11 12.700L12.300 15.500L13.500 15L12.200 12.300H14.800Z" fill="#ececec" stroke="#aaa" stroke-width=".7"/></g>
<g transform="translate(674.2,49.3) scale(0.9)"><path d="M1.500 6H14" stroke="#aaa" stroke-width="1.800"/><path d="M2 10L4 7.500M4.500 10L6.500 7.500M7 10L9 7.500" stroke="#bbb" stroke-width="1"/><path d="M9 6V14.500L11 12.700L12.300 15.500L13.500 15L12.200 12.300H14.800Z" fill="#ececec" stroke="#aaa" stroke-width=".7"/></g>
<g transform="translate(693.6,49.3) scale(0.9)"><path d="M3 3.500H14" stroke="#aaa" stroke-width="1.400"/><rect x="2" y="4.500" width="12" height="5.500" fill="#d4d4d4"/><path d="M2 10.500H14" stroke="#9aa8a0" stroke-width="1.400"/><path d="M2.500 14L4.500 11.500M5 14L7 11.500M7.500 14L9.500 11.500" stroke="#aaa" stroke-width="1"/><path d="M9 6V14.500L11 12.700L12.300 15.500L13.500 15L12.200 12.300H14.800Z" fill="#ececec" stroke="#aaa" stroke-width=".7"/></g>
<g transform="translate(718.0,49.3) scale(0.9)"><path d="M1.500 8L5 5H12L14.500 8V11H1.500Z" fill="#d4d4d4" stroke="#b8b8b8" stroke-width=".7"/><path d="M1.500 12.500H14.500" stroke="#a8a8a8" stroke-width="1.600"/><path d="M7 1H9V4.500H10.500L8 7.500L5.500 4.500H7Z" fill="#c8c8c8" stroke="#aaa" stroke-width=".6"/><path d="M9 6V14.500L11 12.700L12.300 15.500L13.500 15L12.200 12.300H14.800Z" fill="#ececec" stroke="#aaa" stroke-width=".7"/></g>
<g transform="translate(737.4,49.3) scale(0.9)"><path d="M3.500 5.500V2H12.500V5.500" fill="none" stroke="#bbb" stroke-width="1.400"/><path d="M1.500 8L4 5.500H12L14.500 8V10.500H1.500Z" fill="#d4d4d4" stroke="#b8b8b8" stroke-width=".7"/><path d="M1.500 12.500H14.500" stroke="#a8a8a8" stroke-width="1.600"/><path d="M9 6V14.500L11 12.700L12.300 15.500L13.500 15L12.200 12.300H14.800Z" fill="#ececec" stroke="#aaa" stroke-width=".7"/></g>
<g transform="translate(756.8,49.3) scale(0.9)"><path d="M2.500 3H13.500" stroke="#d8d8d8" stroke-width="1"/><rect x="3.500" y="5" width="10.500" height="5.500" fill="#d4d4d4" stroke="#bbb" stroke-width=".7"/><path d="M2 12.500H14" stroke="#a8a8a8" stroke-width="1.600"/><path d="M2.500 8H12" stroke="#bdbdbd" stroke-width="1"/><path d="M9 6V14.500L11 12.700L12.300 15.500L13.500 15L12.200 12.300H14.800Z" fill="#ececec" stroke="#aaa" stroke-width=".7"/></g>
<g transform="translate(782.0,49.3) scale(0.9)"><path d="M5 1.500L9 6.500M9 1.500L5 6.500" stroke="#111" stroke-width="1"/><path d="M7 6.500V10" stroke="#111"/><path d="M2 10H11" stroke="#111" stroke-width="1.200"/><path d="M2.500 9V13" stroke="#111" stroke-width="1.400"/><path d="M9 6V14.500L11 12.700L12.300 15.500L13.500 15L12.200 12.300H14.800Z" fill="#f4f4f4" stroke="#3a8f7a" stroke-width=".7"/></g>
<g transform="translate(806.2,49.3) scale(0.9)"><path d="M1.500 7H11C10 10 7 12.500 5.500 12.500C4 12.500 2.500 10 1.500 7Z" fill="#2a3af0"/><path d="M3.500 8.500L4.500 10.500L5.500 8.500M7 8.500V10.500" stroke="#fff" stroke-width=".7" fill="none"/><path d="M1 7H14" stroke="#111" stroke-width="1.100"/><path d="M11 7L14 3V7Z" fill="#fff" stroke="#e01414" stroke-width="1"/></g>
<g transform="translate(825.6,49.3) scale(0.9)"><path d="M1.500 8.500H12.500C11.500 11 8.500 13 6.500 13C4.500 13 2.500 11 1.500 8.500Z" fill="#2a3af0"/><circle cx="5" cy="10.500" r=".9" fill="#fff"/><circle cx="8" cy="10.500" r=".9" fill="#fff"/><path d="M1 8.500H14" stroke="#111" stroke-width="1.100"/><path d="M9 8.500C12 7.500 13 5 14 2V8.500Z" fill="#f8d0d0" stroke="#e01414" stroke-width="1"/></g>
<g transform="translate(845.1,49.3) scale(0.9)"><path d="M3 3H14L9.500 9Z" fill="none" stroke="#bbb" stroke-width="1"/><path d="M5 4.500L12 5.500" stroke="#ccc"/></g>
<g transform="translate(864.2,49.3) scale(0.9)"></g>
<g transform="translate(883.8,49.3) scale(0.9)"><rect x="2.500" y="4.500" width="11" height="6.500" fill="#cdcdcd" stroke="#b8b8b8" stroke-width=".8"/><path d="M2 13.500L14 1.500" stroke="#999" stroke-width="1"/></g>
<g transform="translate(908.5,49.3) scale(0.9)"><circle cx="4.500" cy="3.500" r="2.900" fill="#7c7c7c"/><circle cx="12" cy="11.500" r="2.900" fill="#9c9c9c"/><path d="M4 7L8 11.500M8 11.500V9.500M8 11.500H6" stroke="#999" stroke-width="1" fill="none"/></g>
<g transform="translate(927.9,49.3) scale(0.9)"><circle cx="4" cy="8" r="2.900" fill="#7c7c7c"/><circle cx="12" cy="8" r="2.900" fill="#9c9c9c"/><path d="M8 2V14" stroke="#bbb" stroke-width="1" stroke-dasharray="1.500 1"/></g>
<g transform="translate(947.9,49.3) scale(0.9)"><circle cx="4.500" cy="3.500" r="2.900" fill="#7c7c7c"/><circle cx="11.500" cy="7.500" r="2.900" fill="#9c9c9c"/><path d="M9.500 1.500L4.500 13.500" stroke="#bbb" stroke-dasharray="1.500 1"/><path d="M5 9L7 12L9.500 10" stroke="#999" fill="none"/></g>
<g transform="translate(967.3,49.3) scale(0.9)"><circle cx="4.500" cy="3.500" r="2.900" fill="#7c7c7c"/><circle cx="12" cy="11.500" r="2.900" fill="#9c9c9c"/><path d="M4.500 7.500L8 11M4.500 7.500V9.500M4.500 7.500H6.500M8 11V9M8 11H6" stroke="#999" stroke-width="1" fill="none"/></g>
<path d="M395.500 55.500H400.500L398 58.500Z" fill="#111"/>
<path d="M1000.500 58.500H1006" stroke="#222" stroke-width="1.200"/><path d="M1000.300 61H1006.200L1003.200 64.200Z" fill="#111"/>
<defs><linearGradient id="gsel" x1="0" y1="0" x2="0" y2="1"><stop offset="0" stop-color="#fbb468"/><stop offset=".5" stop-color="#fdb760"/><stop offset="1" stop-color="#fdc47e"/></linearGradient></defs>
<rect x="120.1" y="89.800" width="19.8" height="19.200" fill="url(#gsel)"/>
<path d="M123.1 107.800H137.9" stroke="#f09a48" stroke-width="1" stroke-dasharray="1.500 1.500"/>
<rect x="330.1" y="89.800" width="19.6" height="19.200" fill="url(#gsel)"/>
<path d="M333.1 107.800H347.7" stroke="#f09a48" stroke-width="1" stroke-dasharray="1.500 1.500"/>
<rect x="471.6" y="89.800" width="19.3" height="19.200" fill="url(#gsel)"/>
<path d="M474.6 107.800H488.9" stroke="#f09a48" stroke-width="1" stroke-dasharray="1.500 1.500"/>
<path d="M118.0 93V106" stroke="#8fb2e6" stroke-width="1"/><path d="M119.0 94V107" stroke="#eef4fd" stroke-width="1"/>
<path d="M162.4 93V106" stroke="#8fb2e6" stroke-width="1"/><path d="M163.4 94V107" stroke="#eef4fd" stroke-width="1"/>
<path d="M283.7 93V106" stroke="#8fb2e6" stroke-width="1"/><path d="M284.7 94V107" stroke="#eef4fd" stroke-width="1"/>
<path d="M327.6 93V106" stroke="#8fb2e6" stroke-width="1"/><path d="M328.6 94V107" stroke="#eef4fd" stroke-width="1"/>
<path d="M449.7 93V106" stroke="#8fb2e6" stroke-width="1"/><path d="M450.7 94V107" stroke="#eef4fd" stroke-width="1"/>
<path d="M513.9 93V106" stroke="#8fb2e6" stroke-width="1"/><path d="M514.9 94V107" stroke="#eef4fd" stroke-width="1"/>
<path d="M596.6 93V106" stroke="#8fb2e6" stroke-width="1"/><path d="M597.6 94V107" stroke="#eef4fd" stroke-width="1"/>
<g transform="translate(122.5,92.0) scale(0.94)"><path d="M5 1.500V13L7.800 10.500L9.600 14.500L11.500 13.700L9.700 9.800H13.300Z" fill="#fff" stroke="#111" stroke-width="1.200"/></g>
<g transform="translate(142.8,92.0) scale(0.94)"><path d="M5.500 2C1.500 4 1.500 11 6 13" fill="none" stroke="#333" stroke-width="1" stroke-dasharray="1.600 1"/><path d="M4.500 13.800L7.500 13.500L6 11Z" fill="#333"/><path d="M9.500 1.500L13.500 5.500L9.500 9.500L5.500 5.500Z" fill="#a8c8f4" stroke="#8aa8d8" stroke-width=".6"/><path d="M10 7V14L11.600 12.600L12.700 15L13.700 14.600L12.700 12.200H14.500Z" fill="#ece8d0" stroke="#888" stroke-width=".6"/></g>
<g transform="translate(166.5,92.0) scale(0.94)"><circle cx="9.500" cy="6" r="4" fill="#f4fbff" stroke="#111" stroke-width="1.400"/><path d="M6.500 6A3 3 0 0 1 12.500 6Z" fill="#7fe8f0" transform="rotate(35 9.500 6)"/><path d="M6.800 9L2.500 13.500" stroke="#111" stroke-width="2"/><path d="M10.500 15L12.300 10.500L14.100 15M11.200 13.500H13.400" stroke="#111" stroke-width="1.100" fill="none"/></g>
<g transform="translate(185.3,92.0) scale(0.94)"><circle cx="9.500" cy="6" r="4" fill="#f4fbff" stroke="#b8b8b8" stroke-width="1.400"/><path d="M6.500 6A3 3 0 0 1 12.500 6Z" fill="#d8d8d8" transform="rotate(35 9.500 6)"/><path d="M6.800 9L2.500 13.500" stroke="#b0b0b0" stroke-width="2"/></g>
<g transform="translate(205.3,92.0) scale(0.94)"><circle cx="9.500" cy="6" r="4" fill="#f4fbff" stroke="#111" stroke-width="1.400"/><path d="M6.500 6A3 3 0 0 1 12.500 6Z" fill="#7fe8f0" transform="rotate(35 9.500 6)"/><path d="M6.800 9L2.500 13.500" stroke="#111" stroke-width="2"/></g>
<g transform="translate(224.7,92.0) scale(0.94)"><path d="M8 1.500V14.500M1.500 8H14.500" stroke="#111" stroke-width="1.300"/><path d="M8 0.800L10 3.500H6ZM8 15.200L10 12.500H6ZM0.800 8L3.500 6V10ZM15.200 8L12.500 6V10Z" fill="#111"/></g>
<g transform="translate(244.0,92.0) scale(0.94)"><circle cx="9.500" cy="6" r="4" fill="#f4fbff" stroke="#111" stroke-width="1.400"/><path d="M6.500 6A3 3 0 0 1 12.500 6Z" fill="#7fe8f0" transform="rotate(35 9.500 6)"/><path d="M6.800 9L2.500 13.500" stroke="#111" stroke-width="2"/><path d="M10.500 13H14.500M12.500 11V15" stroke="#333" stroke-width="1.200"/></g>
<g transform="translate(263.8,92.0) scale(0.94)"><circle cx="9.500" cy="6" r="4" fill="#f4fbff" stroke="#111" stroke-width="1.400"/><path d="M6.500 6A3 3 0 0 1 12.500 6Z" fill="#7fe8f0" transform="rotate(35 9.500 6)"/><path d="M6.800 9L2.500 13.500" stroke="#111" stroke-width="2"/><path d="M10.500 13.500H14.500" stroke="#333" stroke-width="1.200"/></g>
<g transform="translate(287.9,92.0) scale(0.94)"><circle cx="8" cy="8" r="6.500" fill="url(#gbk)" stroke="#8898d8" stroke-width=".8"/><path d="M12 8H5.500M8 4.800L4.500 8L8 11.200" stroke="#fff" stroke-width="2" fill="none"/></g>
<g transform="translate(307.2,92.0) scale(0.94)"><circle cx="8" cy="8" r="6.500" fill="#c4c4c4" stroke="#d4d4d4" stroke-width=".8"/><path d="M4 8H10.500M8 4.800L11.500 8L8 11.200" stroke="#e6e6e6" stroke-width="2" fill="none"/></g>
<g transform="translate(332.5,92.0) scale(0.94)"><path d="M2.500 8L5.500 3.500L9 2L13.500 4V10.500L8.500 14.500H2.500Z" fill="#f2f0e4" stroke="#555" stroke-width="1"/><path d="M2.500 8L5.500 3.500L8.500 8V14.500M8.500 8L13.500 4M5.500 3.500L9 2" fill="none" stroke="#555" stroke-width=".9"/><rect x="4.300" y="10" width="2.400" height="4" fill="#f0e020" stroke="#555" stroke-width=".6"/><path d="M10.500 8.500L12 7.300V9.500L10.500 10.700Z" fill="#f0e020"/></g>
<g transform="translate(351.5,92.0) scale(0.94)"><rect x="3.500" y="1.500" width="9" height="13" fill="#ebe8dc" stroke="#444" stroke-width="1.100"/><rect x="5.500" y="4" width="5" height="8" fill="#f8f7f0" stroke="#888" stroke-width=".8"/><path d="M3.500 1.500L5.500 4M12.500 1.500L10.500 4M3.500 14.500L5.500 12M12.500 14.500L10.500 12" stroke="#888" stroke-width=".7"/><rect x="4.300" y="7" width="1.400" height="3" fill="#d82020"/><path d="M2 8H3.500M12.500 8H14" stroke="#444"/></g>
<g transform="translate(370.9,92.0) scale(0.94)"><path d="M3.500 8V14.500H12.500V8" fill="#fff" stroke="#777" stroke-width="1"/><path d="M1.500 9L8 2.500L14.500 9" fill="none" stroke="#a89a28" stroke-width="1.600"/><path d="M3.500 8.500L8 4L12.500 8.500Z" fill="#fff"/><rect x="4" y="2" width="1.600" height="3.500" fill="#d82020"/><rect x="6.800" y="9.500" width="2.600" height="5" fill="#f0e020" stroke="#555" stroke-width=".7"/></g>
<g transform="translate(390.4,92.0) scale(0.94)"><path d="M2 8.500L5 4.500H11L14 8.500Z" fill="#ece8d8" stroke="#777" stroke-width=".9"/><rect x="2" y="8.500" width="12" height="5.500" fill="#f4f2ea" stroke="#666" stroke-width="1"/><rect x="7" y="1.500" width="2.400" height="4.500" fill="#d82020"/><rect x="4" y="10" width="3" height="2" fill="#e0d020" stroke="#666" stroke-width=".5"/><rect x="9" y="10" width="3" height="2" fill="#e0d020" stroke="#666" stroke-width=".5"/></g>
<g transform="translate(410.0,92.0) scale(0.94)"><path d="M9.500 13.500A5.500 5.500 0 1 1 13 6" fill="none" stroke="#222" stroke-width="1.100"/><path d="M11 7H15L13 9.800Z" fill="#111"/><circle cx="8" cy="8.500" r="1" fill="#111"/><path d="M6.500 8.500H9.500" stroke="#111" stroke-width=".8"/></g>
<g transform="translate(429.7,92.0) scale(0.94)"><path d="M2 4.500H14.500M2 8H14.500M2 11.500H14.500M4.500 2V14.500M8 2V14.500M11.500 2V14.500" stroke="#b0aaa8" stroke-width="1.100"/></g>
<g transform="translate(453.5,92.0) scale(0.94)"><path d="M2 4.500L6 3H14V10.500L10 13H2Z" fill="#d8d8d8" stroke="#8a8a8a" stroke-width=".9"/><path d="M2 4.500H10V13M10 4.500L14 3" stroke="#999" stroke-width=".8" fill="none"/><circle cx="10.500" cy="7.500" r="2.400" fill="#6a7a8a" stroke="#555" stroke-width=".6"/><circle cx="10.500" cy="7.500" r="1" fill="#2a6ad0"/></g>
<g transform="translate(473.7,92.0) scale(0.94)"><path d="M4 3H11C13 3 13 6 11 6.500L5.500 9C3.500 10 4 12.500 6 12.500H12" fill="none" stroke="#222" stroke-width="1" stroke-dasharray="1.600 1"/><path d="M5.500 3L3 1.800V4.200ZM11 12.500L13.500 11V14Z" fill="#111"/><circle cx="8.500" cy="12.500" r="1.100" fill="#111"/></g>
<g transform="translate(492.5,92.0) scale(0.94)"><path d="M4 8.500V14H12V8.500" fill="#f0f0f0" stroke="#c4c4c4" stroke-width="1"/><path d="M2 9.500L8 3.500L14 9.500" fill="none" stroke="#c8c8c8" stroke-width="1.400"/><rect x="7" y="10" width="2.400" height="4" fill="#e4e4e4" stroke="#bbb" stroke-width=".7"/></g>
<g transform="translate(517.8,92.0) scale(0.94)"><path d="M2 1.500C2 9 6 13.500 13.500 13.500M5.500 1.500C5.500 7 8.500 10.500 13.500 10.500M9 1.500C9 5 10.500 7.500 13.500 7.500M12 1.500C12 3 12.500 4.500 13.500 4.500" fill="none" stroke="#2a2af0" stroke-width="1.400"/></g>
<g transform="translate(536.9,92.0) scale(0.94)"><rect x="1.500" y="4" width="12.500" height="8" fill="#2a3ae8" stroke="#111" stroke-width="1"/><path d="M2 11.500L9 6L13.500 4.500V11.500Z" fill="#e8e8e8"/><path d="M4 11.500C4 8 7 6 10 6" stroke="#aac8f8" fill="none"/><circle cx="2.500" cy="10.500" r="1.200" fill="#e02060"/><path d="M1 14.500L14.500 1" stroke="#333" stroke-width=".9"/></g>
<g transform="translate(556.7,92.0) scale(0.94)"><path d="M2.500 1.500V12L5 9.800L6.700 13.500L8.300 12.800L6.600 9.200H9.800Z" fill="#f8f8f8" stroke="#111" stroke-width="1.100"/><path d="M12 7V14.500M10 10.800H14M12 6L13 8H11ZM12 15.300L13 13.500H11Z" stroke="#111" stroke-width=".9" fill="#111"/></g>
<g transform="translate(576.0,92.0) scale(0.94)"><path d="M14 2V13.500H1.500" fill="none" stroke="#222" stroke-width="1" stroke-dasharray="1.200 1"/><path d="M11 2H14" stroke="#222" stroke-width="1.200"/><path d="M5 3H6.500M8 3H9.500M5 5H6.500M8 5H9.500M5.500 9.500H7M8.500 9.500H10M5.500 11.500H7M8.500 11.500H10" stroke="#222" stroke-width="1.100"/></g>
<g transform="translate(599.9,91.0)"><rect x="1.200" y="1.200" width="13.600" height="13.600" fill="#f0f3fb" stroke="#2b3596" stroke-width="1.050"/><g transform="translate(1.600,1.600) scale(.8)"><path d="M2.500 8L5.500 3.500L9 2L13.500 4V10.500L8.500 14.500H2.500Z" fill="#f2f0e4" stroke="#555" stroke-width="1"/><path d="M2.500 8L5.500 3.500L8.500 8V14.500M8.500 8L13.500 4M5.500 3.500L9 2" fill="none" stroke="#555" stroke-width=".9"/><rect x="4.300" y="10" width="2.400" height="4" fill="#f0e020" stroke="#555" stroke-width=".6"/><path d="M10.500 8.500L12 7.300V9.500L10.500 10.700Z" fill="#f0e020"/></g><path d="M1 4.500H2.500M13.500 4.500H15M1 11.500H2.500M13.500 11.500H15" stroke="#2b3596" stroke-width=".6"/></g>
<g transform="translate(619.2,91.0)"><rect x="1.200" y="1.200" width="13.600" height="13.600" fill="#f0f3fb" stroke="#2b3596" stroke-width="1.050"/><g transform="translate(1.600,1.600) scale(.8)"><path d="M3 8.500V14H13V8.500L8 3.500Z" fill="#fff" stroke="#666" stroke-width="1"/><path d="M2 9.500L8 3.500L14 9.500" fill="none" stroke="#a89a28" stroke-width="1.500"/><rect x="10.500" y="3" width="1.300" height="3" fill="#d82020"/></g><path d="M1 4.500H2.500M13.500 4.500H15M1 11.500H2.500M13.500 11.500H15" stroke="#2b3596" stroke-width=".6"/></g>
<g transform="translate(638.8,91.0)"><rect x="1.200" y="1.200" width="13.600" height="13.600" fill="#f0f3fb" stroke="#2b3596" stroke-width="1.050"/><g transform="translate(1.600,1.600) scale(.8)"><path d="M2 8.500L5 4.500H11L14 8.500Z" fill="#ece8d8" stroke="#777" stroke-width=".9"/><rect x="2" y="8.500" width="12" height="5.500" fill="#f4f2ea" stroke="#666" stroke-width="1"/><rect x="7" y="1.500" width="2.400" height="4.500" fill="#d82020"/><rect x="4" y="10" width="3" height="2" fill="#e0d020" stroke="#666" stroke-width=".5"/><rect x="9" y="10" width="3" height="2" fill="#e0d020" stroke="#666" stroke-width=".5"/></g><path d="M1 4.500H2.500M13.500 4.500H15M1 11.500H2.500M13.500 11.500H15" stroke="#2b3596" stroke-width=".6"/></g>
<g transform="translate(658.2,91.0)"><rect x="1.200" y="1.200" width="13.600" height="13.600" fill="#f0f3fb" stroke="#2b3596" stroke-width="1.050"/><g transform="translate(1.600,1.600) scale(.8)"><rect x="3.500" y="1.500" width="9" height="13" fill="#ebe8dc" stroke="#444" stroke-width="1.100"/><rect x="5.500" y="4" width="5" height="8" fill="#f8f7f0" stroke="#888" stroke-width=".8"/><path d="M3.500 1.500L5.500 4M12.500 1.500L10.500 4M3.500 14.500L5.500 12M12.500 14.500L10.500 12" stroke="#888" stroke-width=".7"/><rect x="4.300" y="7" width="1.400" height="3" fill="#d82020"/><path d="M2 8H3.500M12.500 8H14" stroke="#444"/></g><path d="M1 4.500H2.500M13.500 4.500H15M1 11.500H2.500M13.500 11.500H15" stroke="#2b3596" stroke-width=".6"/></g>
<g transform="translate(677.6,91.0)"><rect x="1.200" y="1.200" width="13.600" height="13.600" fill="#f0f3fb" stroke="#2b3596" stroke-width="1.050"/><g transform="translate(1.600,1.600) scale(.8)"><path d="M2.500 9C3.500 5.500 5.500 4.500 8 4.500C10.500 4.500 12.500 5.500 13.500 9Z" fill="#ece8d8" stroke="#777" stroke-width=".9"/><rect x="2.500" y="9" width="11" height="5" fill="#f4f2ea" stroke="#666" stroke-width="1"/><rect x="6.800" y="3.200" width="2.600" height="1.600" fill="#d82020"/><rect x="4" y="10.300" width="3" height="2" fill="#e0d020" stroke="#666" stroke-width=".5"/><rect x="9" y="10.300" width="3" height="2" fill="#e0d020" stroke="#666" stroke-width=".5"/></g><path d="M1 4.500H2.500M13.500 4.500H15M1 11.500H2.500M13.500 11.500H15" stroke="#2b3596" stroke-width=".6"/></g>
<g transform="translate(697.0,91.0)"><rect x="1.200" y="1.200" width="13.600" height="13.600" fill="#f0f3fb" stroke="#2b3596" stroke-width="1.050"/><g transform="translate(1.600,1.600) scale(.8)"><rect x="3" y="2.500" width="10" height="11" fill="#ebe8dc" stroke="#555" stroke-width="1"/></g><path d="M1 4.500H2.500M13.500 4.500H15M1 11.500H2.500M13.500 11.500H15" stroke="#2b3596" stroke-width=".6"/></g>
<g transform="translate(716.6,91.0)"><rect x="1.200" y="1.200" width="13.600" height="13.600" fill="#f0f3fb" stroke="#2b3596" stroke-width="1.050"/><g transform="translate(1.600,1.600) scale(.8)"><path d="M3.500 8V14.500H12.500V8" fill="#fff" stroke="#777" stroke-width="1"/><path d="M1.500 9L8 2.500L14.500 9" fill="none" stroke="#a89a28" stroke-width="1.600"/><path d="M3.500 8.500L8 4L12.500 8.500Z" fill="#fff"/><rect x="4" y="2" width="1.600" height="3.500" fill="#d82020"/><rect x="6.800" y="9.500" width="2.600" height="5" fill="#f0e020" stroke="#555" stroke-width=".7"/></g><path d="M1 4.500H2.500M13.500 4.500H15M1 11.500H2.500M13.500 11.500H15" stroke="#2b3596" stroke-width=".6"/></g>
</svg>
<span class="t" style="left:867.5px;top:52.4px;font-size:10.5px;line-height:10.5px;font-weight:bold;color:#111;letter-spacing:-0.1px;-webkit-text-stroke:0.14px #111;transform:scaleX(1.000);font-style:italic;font-family:'Liberation Serif',serif;">f</span>
<span class="t" style="left:871.3px;top:56.1px;font-size:6.5px;line-height:6.5px;font-weight:bold;color:#111;letter-spacing:-0.1px;-webkit-text-stroke:0.14px #111;transform:scaleX(1.000);font-style:italic;">x</span>
<span class="t" style="left:846.0px;top:57.5px;font-size:7.5px;line-height:7.5px;color:#b4b4b4;letter-spacing:-0.1px;transform:scaleX(1.000);">Z2</span>
<svg class="dr" style="position:absolute;left:22px;top:113px;overflow:hidden" width="785" height="560" viewBox="22 113 785 560" fill="none">
<polygon points="590.0,141.5 657.2,161.0 657.2,185.5 590.0,166.0" fill="rgba(98,78,228,0.54)" stroke="rgba(98,78,228,0.85)" stroke-width="0.8"/>
<path d="M657.2 161.0V185.5" stroke="#7a66ea" stroke-width="2"/>
<path d="M653.8 181.5H660.8L657.2 187.5Z" fill="#7a66ea"/>
<path d="M657.2 187.5V247.4" stroke="rgba(98,78,228,0.85)" stroke-width="0.8" stroke-dasharray="1.5 1.3"/>
<text x="623.6" y="173.8" transform="rotate(16.2 623.6 173.8)" font-size="9.5" fill="#111" text-anchor="middle">0,43 [kN/m]</text>
<polygon points="657.2,217.9 696.8,229.4 696.8,253.9 657.2,242.4" fill="rgba(98,78,228,0.54)" stroke="rgba(98,78,228,0.85)" stroke-width="0.8"/>
<path d="M696.8 229.4V253.9" stroke="#7a66ea" stroke-width="2"/>
<path d="M693.3 249.9H700.3L696.8 255.9Z" fill="#7a66ea"/>
<path d="M696.8 255.9V292.3" stroke="rgba(98,78,228,0.85)" stroke-width="0.8" stroke-dasharray="1.5 1.3"/>
<text x="677.0" y="246.1" transform="rotate(16.2 677.0 246.1)" font-size="9.5" fill="#111" text-anchor="middle">0,43 [kN/m]</text>
<polygon points="696.8,262.8 724.5,270.9 724.5,295.4 696.8,287.3" fill="rgba(98,78,228,0.54)" stroke="rgba(98,78,228,0.85)" stroke-width="0.8"/>
<path d="M724.5 270.9V295.4" stroke="#7a66ea" stroke-width="2"/>
<path d="M721.0 291.4H728.0L724.5 297.4Z" fill="#7a66ea"/>
<path d="M724.5 297.4V323.8" stroke="rgba(98,78,228,0.85)" stroke-width="0.8" stroke-dasharray="1.5 1.3"/>
<text x="710.6" y="289.3" transform="rotate(16.2 710.6 289.3)" font-size="9.5" fill="#111" text-anchor="middle">0,43 [kN/m]</text>
<polygon points="509.0,120.1 590.0,142.0 590.0,164.0 509.0,142.1" fill="rgba(98,78,228,0.54)" stroke="rgba(98,78,228,0.85)" stroke-width="0.8"/>
<path d="M509.0 120.1V142.1" stroke="#7a66ea" stroke-width="2"/>
<path d="M505.5 138.1H512.5L509.0 144.1Z" fill="#7a66ea"/>
<path d="M509.0 144.1V226.5" stroke="rgba(98,78,228,0.85)" stroke-width="0.8" stroke-dasharray="1.5 1.3"/>
<polygon points="482.0,190.2 509.0,197.5 509.0,219.5 482.0,212.2" fill="rgba(98,78,228,0.54)" stroke="rgba(98,78,228,0.85)" stroke-width="0.8"/>
<path d="M482.0 190.2V212.2" stroke="#7a66ea" stroke-width="2"/>
<path d="M478.5 208.2H485.5L482.0 214.2Z" fill="#7a66ea"/>
<path d="M482.0 214.2V245.0" stroke="rgba(98,78,228,0.85)" stroke-width="0.8" stroke-dasharray="1.5 1.3"/>
<polygon points="524.6,198.1 591.9,217.6 591.9,242.1 524.6,222.6" fill="rgba(98,78,228,0.54)" stroke="rgba(98,78,228,0.85)" stroke-width="0.8"/>
<path d="M591.9 217.6V242.1" stroke="#7a66ea" stroke-width="2"/>
<path d="M588.4 238.1H595.4L591.9 244.1Z" fill="#7a66ea"/>
<path d="M591.9 244.1V304.0" stroke="rgba(98,78,228,0.85)" stroke-width="0.8" stroke-dasharray="1.5 1.3"/>
<text x="558.2" y="230.4" transform="rotate(16.2 558.2 230.4)" font-size="9.5" fill="#111" text-anchor="middle">0,43 [kN/m]</text>
<polygon points="591.9,274.5 631.4,286.0 631.4,310.5 591.9,299.0" fill="rgba(98,78,228,0.54)" stroke="rgba(98,78,228,0.85)" stroke-width="0.8"/>
<path d="M631.4 286.0V310.5" stroke="#7a66ea" stroke-width="2"/>
<path d="M627.9 306.5H634.9L631.4 312.5Z" fill="#7a66ea"/>
<path d="M631.4 312.5V348.9" stroke="rgba(98,78,228,0.85)" stroke-width="0.8" stroke-dasharray="1.5 1.3"/>
<text x="611.6" y="302.7" transform="rotate(16.2 611.6 302.7)" font-size="9.5" fill="#111" text-anchor="middle">0,43 [kN/m]</text>
<polygon points="631.4,319.4 659.1,327.5 659.1,352.0 631.4,343.9" fill="rgba(98,78,228,0.54)" stroke="rgba(98,78,228,0.85)" stroke-width="0.8"/>
<path d="M659.1 327.5V352.0" stroke="#7a66ea" stroke-width="2"/>
<path d="M655.6 348.0H662.6L659.1 354.0Z" fill="#7a66ea"/>
<path d="M659.1 354.0V380.4" stroke="rgba(98,78,228,0.85)" stroke-width="0.8" stroke-dasharray="1.5 1.3"/>
<text x="645.2" y="345.9" transform="rotate(16.2 645.2 345.9)" font-size="9.5" fill="#111" text-anchor="middle">0,43 [kN/m]</text>
<polygon points="443.6,176.7 524.6,198.6 524.6,220.6 443.6,198.7" fill="rgba(98,78,228,0.54)" stroke="rgba(98,78,228,0.85)" stroke-width="0.8"/>
<path d="M443.6 176.7V198.7" stroke="#7a66ea" stroke-width="2"/>
<path d="M440.1 194.7H447.1L443.6 200.7Z" fill="#7a66ea"/>
<path d="M443.6 200.7V283.1" stroke="rgba(98,78,228,0.85)" stroke-width="0.8" stroke-dasharray="1.5 1.3"/>
<polygon points="416.6,246.8 443.6,254.1 443.6,276.1 416.6,268.8" fill="rgba(98,78,228,0.54)" stroke="rgba(98,78,228,0.85)" stroke-width="0.8"/>
<path d="M416.6 246.8V268.8" stroke="#7a66ea" stroke-width="2"/>
<path d="M413.1 264.8H420.1L416.6 270.8Z" fill="#7a66ea"/>
<path d="M416.6 270.8V301.6" stroke="rgba(98,78,228,0.85)" stroke-width="0.8" stroke-dasharray="1.5 1.3"/>
<text x="484.1" y="208.7" transform="rotate(15.1 484.1 208.7)" font-size="9.5" fill="#111" text-anchor="middle">0,32 [kN/m]</text>
<polygon points="459.2,254.7 526.5,274.2 526.5,298.7 459.2,279.2" fill="rgba(98,78,228,0.54)" stroke="rgba(98,78,228,0.85)" stroke-width="0.8"/>
<path d="M526.5 274.2V298.7" stroke="#7a66ea" stroke-width="2"/>
<path d="M523.0 294.7H530.0L526.5 300.7Z" fill="#7a66ea"/>
<path d="M526.5 300.7V360.6" stroke="rgba(98,78,228,0.85)" stroke-width="0.8" stroke-dasharray="1.5 1.3"/>
<text x="492.8" y="287.0" transform="rotate(16.2 492.8 287.0)" font-size="9.5" fill="#111" text-anchor="middle">0,43 [kN/m]</text>
<polygon points="526.5,331.1 566.0,342.6 566.0,367.1 526.5,355.6" fill="rgba(98,78,228,0.54)" stroke="rgba(98,78,228,0.85)" stroke-width="0.8"/>
<path d="M566.0 342.6V367.1" stroke="#7a66ea" stroke-width="2"/>
<path d="M562.5 363.1H569.5L566.0 369.1Z" fill="#7a66ea"/>
<path d="M566.0 369.1V405.5" stroke="rgba(98,78,228,0.85)" stroke-width="0.8" stroke-dasharray="1.5 1.3"/>
<text x="546.2" y="359.3" transform="rotate(16.2 546.2 359.3)" font-size="9.5" fill="#111" text-anchor="middle">0,43 [kN/m]</text>
<polygon points="566.0,376.0 593.7,384.1 593.7,408.6 566.0,400.5" fill="rgba(98,78,228,0.54)" stroke="rgba(98,78,228,0.85)" stroke-width="0.8"/>
<path d="M593.7 384.1V408.6" stroke="#7a66ea" stroke-width="2"/>
<path d="M590.2 404.6H597.2L593.7 410.6Z" fill="#7a66ea"/>
<path d="M593.7 410.6V437.0" stroke="rgba(98,78,228,0.85)" stroke-width="0.8" stroke-dasharray="1.5 1.3"/>
<text x="579.8" y="402.5" transform="rotate(16.2 579.8 402.5)" font-size="9.5" fill="#111" text-anchor="middle">0,43 [kN/m]</text>
<polygon points="378.2,233.3 459.2,255.2 459.2,277.2 378.2,255.3" fill="rgba(98,78,228,0.54)" stroke="rgba(98,78,228,0.85)" stroke-width="0.8"/>
<path d="M378.2 233.3V255.3" stroke="#7a66ea" stroke-width="2"/>
<path d="M374.7 251.3H381.7L378.2 257.3Z" fill="#7a66ea"/>
<path d="M378.2 257.3V339.7" stroke="rgba(98,78,228,0.85)" stroke-width="0.8" stroke-dasharray="1.5 1.3"/>
<polygon points="351.2,303.4 378.2,310.7 378.2,332.7 351.2,325.4" fill="rgba(98,78,228,0.54)" stroke="rgba(98,78,228,0.85)" stroke-width="0.8"/>
<path d="M351.2 303.4V325.4" stroke="#7a66ea" stroke-width="2"/>
<path d="M347.7 321.4H354.7L351.2 327.4Z" fill="#7a66ea"/>
<path d="M351.2 327.4V358.2" stroke="rgba(98,78,228,0.85)" stroke-width="0.8" stroke-dasharray="1.5 1.3"/>
<text x="418.7" y="265.3" transform="rotate(15.1 418.7 265.3)" font-size="9.5" fill="#111" text-anchor="middle">0,32 [kN/m]</text>
<polygon points="393.8,311.3 461.0,330.8 461.0,355.3 393.8,335.8" fill="rgba(98,78,228,0.54)" stroke="rgba(98,78,228,0.85)" stroke-width="0.8"/>
<path d="M461.0 330.8V355.3" stroke="#7a66ea" stroke-width="2"/>
<path d="M457.5 351.3H464.5L461.0 357.3Z" fill="#7a66ea"/>
<path d="M461.0 357.3V417.2" stroke="rgba(98,78,228,0.85)" stroke-width="0.8" stroke-dasharray="1.5 1.3"/>
<text x="427.4" y="343.6" transform="rotate(16.2 427.4 343.6)" font-size="9.5" fill="#111" text-anchor="middle">0,43 [kN/m]</text>
<polygon points="461.0,387.7 500.6,399.2 500.6,423.7 461.0,412.2" fill="rgba(98,78,228,0.54)" stroke="rgba(98,78,228,0.85)" stroke-width="0.8"/>
<path d="M500.6 399.2V423.7" stroke="#7a66ea" stroke-width="2"/>
<path d="M497.1 419.7H504.1L500.6 425.7Z" fill="#7a66ea"/>
<path d="M500.6 425.7V462.1" stroke="rgba(98,78,228,0.85)" stroke-width="0.8" stroke-dasharray="1.5 1.3"/>
<text x="480.8" y="415.9" transform="rotate(16.2 480.8 415.9)" font-size="9.5" fill="#111" text-anchor="middle">0,43 [kN/m]</text>
<polygon points="500.6,432.6 528.3,440.7 528.3,465.2 500.6,457.1" fill="rgba(98,78,228,0.54)" stroke="rgba(98,78,228,0.85)" stroke-width="0.8"/>
<path d="M528.3 440.7V465.2" stroke="#7a66ea" stroke-width="2"/>
<path d="M524.8 461.2H531.8L528.3 467.2Z" fill="#7a66ea"/>
<path d="M528.3 467.2V493.6" stroke="rgba(98,78,228,0.85)" stroke-width="0.8" stroke-dasharray="1.5 1.3"/>
<text x="514.4" y="459.1" transform="rotate(16.2 514.4 459.1)" font-size="9.5" fill="#111" text-anchor="middle">0,43 [kN/m]</text>
<polygon points="312.8,289.9 393.8,311.8 393.8,333.8 312.8,311.9" fill="rgba(98,78,228,0.54)" stroke="rgba(98,78,228,0.85)" stroke-width="0.8"/>
<path d="M312.8 289.9V311.9" stroke="#7a66ea" stroke-width="2"/>
<path d="M309.3 307.9H316.3L312.8 313.9Z" fill="#7a66ea"/>
<path d="M312.8 313.9V396.3" stroke="rgba(98,78,228,0.85)" stroke-width="0.8" stroke-dasharray="1.5 1.3"/>
<polygon points="285.8,360.0 312.8,367.3 312.8,389.3 285.8,382.0" fill="rgba(98,78,228,0.54)" stroke="rgba(98,78,228,0.85)" stroke-width="0.8"/>
<path d="M285.8 360.0V382.0" stroke="#7a66ea" stroke-width="2"/>
<path d="M282.3 378.0H289.3L285.8 384.0Z" fill="#7a66ea"/>
<path d="M285.8 384.0V414.8" stroke="rgba(98,78,228,0.85)" stroke-width="0.8" stroke-dasharray="1.5 1.3"/>
<text x="353.3" y="321.9" transform="rotate(15.1 353.3 321.9)" font-size="9.5" fill="#111" text-anchor="middle">0,32 [kN/m]</text>
<polygon points="328.4,367.9 395.6,387.4 395.6,411.9 328.4,392.4" fill="rgba(98,78,228,0.54)" stroke="rgba(98,78,228,0.85)" stroke-width="0.8"/>
<path d="M395.6 387.4V411.9" stroke="#7a66ea" stroke-width="2"/>
<path d="M392.1 407.9H399.1L395.6 413.9Z" fill="#7a66ea"/>
<path d="M395.6 413.9V473.8" stroke="rgba(98,78,228,0.85)" stroke-width="0.8" stroke-dasharray="1.5 1.3"/>
<text x="362.0" y="400.2" transform="rotate(16.2 362.0 400.2)" font-size="9.5" fill="#111" text-anchor="middle">0,43 [kN/m]</text>
<polygon points="395.6,444.3 435.2,455.8 435.2,480.3 395.6,468.8" fill="rgba(98,78,228,0.54)" stroke="rgba(98,78,228,0.85)" stroke-width="0.8"/>
<path d="M435.2 455.8V480.3" stroke="#7a66ea" stroke-width="2"/>
<path d="M431.7 476.3H438.7L435.2 482.3Z" fill="#7a66ea"/>
<path d="M435.2 482.3V518.7" stroke="rgba(98,78,228,0.85)" stroke-width="0.8" stroke-dasharray="1.5 1.3"/>
<text x="415.4" y="472.5" transform="rotate(16.2 415.4 472.5)" font-size="9.5" fill="#111" text-anchor="middle">0,43 [kN/m]</text>
<polygon points="435.2,489.2 462.9,497.3 462.9,521.8 435.2,513.7" fill="rgba(98,78,228,0.54)" stroke="rgba(98,78,228,0.85)" stroke-width="0.8"/>
<path d="M462.9 497.3V521.8" stroke="#7a66ea" stroke-width="2"/>
<path d="M459.4 517.8H466.4L462.9 523.8Z" fill="#7a66ea"/>
<path d="M462.9 523.8V550.2" stroke="rgba(98,78,228,0.85)" stroke-width="0.8" stroke-dasharray="1.5 1.3"/>
<text x="449.0" y="515.7" transform="rotate(16.2 449.0 515.7)" font-size="9.5" fill="#111" text-anchor="middle">0,43 [kN/m]</text>
<polygon points="247.4,346.5 328.4,368.4 328.4,390.4 247.4,368.5" fill="rgba(98,78,228,0.54)" stroke="rgba(98,78,228,0.85)" stroke-width="0.8"/>
<path d="M247.4 346.5V368.5" stroke="#7a66ea" stroke-width="2"/>
<path d="M243.9 364.5H250.9L247.4 370.5Z" fill="#7a66ea"/>
<path d="M247.4 370.5V452.9" stroke="rgba(98,78,228,0.85)" stroke-width="0.8" stroke-dasharray="1.5 1.3"/>
<polygon points="220.4,416.6 247.4,423.9 247.4,445.9 220.4,438.6" fill="rgba(98,78,228,0.54)" stroke="rgba(98,78,228,0.85)" stroke-width="0.8"/>
<path d="M220.4 416.6V438.6" stroke="#7a66ea" stroke-width="2"/>
<path d="M216.9 434.6H223.9L220.4 440.6Z" fill="#7a66ea"/>
<path d="M220.4 440.6V471.4" stroke="rgba(98,78,228,0.85)" stroke-width="0.8" stroke-dasharray="1.5 1.3"/>
<text x="287.9" y="378.5" transform="rotate(15.1 287.9 378.5)" font-size="9.5" fill="#111" text-anchor="middle">0,32 [kN/m]</text>
<polygon points="263.0,424.5 330.2,444.0 330.2,468.5 263.0,449.0" fill="rgba(98,78,228,0.54)" stroke="rgba(98,78,228,0.85)" stroke-width="0.8"/>
<path d="M330.2 444.0V468.5" stroke="#7a66ea" stroke-width="2"/>
<path d="M326.8 464.5H333.8L330.2 470.5Z" fill="#7a66ea"/>
<path d="M330.2 470.5V530.4" stroke="rgba(98,78,228,0.85)" stroke-width="0.8" stroke-dasharray="1.5 1.3"/>
<polygon points="330.2,500.9 369.8,512.4 369.8,536.9 330.2,525.4" fill="rgba(98,78,228,0.54)" stroke="rgba(98,78,228,0.85)" stroke-width="0.8"/>
<path d="M369.8 512.4V536.9" stroke="#7a66ea" stroke-width="2"/>
<path d="M366.3 532.9H373.3L369.8 538.9Z" fill="#7a66ea"/>
<path d="M369.8 538.9V575.3" stroke="rgba(98,78,228,0.85)" stroke-width="0.8" stroke-dasharray="1.5 1.3"/>
<polygon points="369.8,545.8 397.5,553.9 397.5,578.4 369.8,570.3" fill="rgba(98,78,228,0.54)" stroke="rgba(98,78,228,0.85)" stroke-width="0.8"/>
<path d="M397.5 553.9V578.4" stroke="#7a66ea" stroke-width="2"/>
<path d="M394.0 574.4H401.0L397.5 580.4Z" fill="#7a66ea"/>
<path d="M397.5 580.4V606.8" stroke="rgba(98,78,228,0.85)" stroke-width="0.8" stroke-dasharray="1.5 1.3"/>
<text x="383.6" y="572.3" transform="rotate(16.2 383.6 572.3)" font-size="9.5" fill="#111" text-anchor="middle">0,43 [kN/m]</text>
<polygon points="182.0,403.1 263.0,425.0 263.0,447.0 182.0,425.1" fill="rgba(98,78,228,0.54)" stroke="rgba(98,78,228,0.85)" stroke-width="0.8"/>
<path d="M182.0 403.1V425.1" stroke="#7a66ea" stroke-width="2"/>
<path d="M178.5 421.1H185.5L182.0 427.1Z" fill="#7a66ea"/>
<path d="M182.0 427.1V509.5" stroke="rgba(98,78,228,0.85)" stroke-width="0.8" stroke-dasharray="1.5 1.3"/>
<polygon points="155.0,473.2 182.0,480.5 182.0,502.5 155.0,495.2" fill="rgba(98,78,228,0.54)" stroke="rgba(98,78,228,0.85)" stroke-width="0.8"/>
<path d="M155.0 473.2V495.2" stroke="#7a66ea" stroke-width="2"/>
<path d="M151.5 491.2H158.5L155.0 497.2Z" fill="#7a66ea"/>
<path d="M155.0 497.2V528.0" stroke="rgba(98,78,228,0.85)" stroke-width="0.8" stroke-dasharray="1.5 1.3"/>
<text x="222.5" y="435.1" transform="rotate(15.1 222.5 435.1)" font-size="9.5" fill="#111" text-anchor="middle">0,32 [kN/m]</text>
<polygon points="590.0,171.0 724.5,323.8 740.7,308.9 606.2,156.1" fill="rgba(98,78,228,0.54)" stroke="rgba(98,78,228,0.85)" stroke-width="0.6"/>
<polygon points="590.0,171.0 724.5,323.8 735.5,313.7 601.0,160.9" fill="rgba(98,78,228,0.54)" stroke="rgba(98,78,228,0.85)" stroke-width="0.6"/>
<polygon points="590.0,171.0 724.5,323.8 724.5,311.8 590.0,159.0" fill="rgba(98,78,228,0.54)" stroke="rgba(98,78,228,0.85)" stroke-width="0.6"/>
<polygon points="590.0,171.0 724.5,323.8 724.5,302.8 590.0,150.0" fill="rgba(98,78,228,0.54)" stroke="rgba(98,78,228,0.85)" stroke-width="0.6"/>
<polygon points="482.0,245.0 590.0,171.0 571.3,147.6 463.3,221.6" fill="rgba(98,78,228,0.54)" stroke="rgba(98,78,228,0.85)" stroke-width="0.6"/>
<polygon points="482.0,245.0 590.0,171.0 590.0,157.0 482.0,231.0" fill="rgba(98,78,228,0.54)" stroke="rgba(98,78,228,0.85)" stroke-width="0.6"/>
<polygon points="482.0,245.0 590.0,171.0 590.0,146.0 482.0,220.0" fill="rgba(98,78,228,0.54)" stroke="rgba(98,78,228,0.85)" stroke-width="0.6"/>
<polygon points="524.6,227.6 659.1,380.4 675.3,365.5 540.8,212.7" fill="rgba(98,78,228,0.54)" stroke="rgba(98,78,228,0.85)" stroke-width="0.6"/>
<polygon points="524.6,227.6 659.1,380.4 670.1,370.3 535.6,217.5" fill="rgba(98,78,228,0.54)" stroke="rgba(98,78,228,0.85)" stroke-width="0.6"/>
<polygon points="524.6,227.6 659.1,380.4 659.1,368.4 524.6,215.6" fill="rgba(98,78,228,0.54)" stroke="rgba(98,78,228,0.85)" stroke-width="0.6"/>
<polygon points="524.6,227.6 659.1,380.4 659.1,359.4 524.6,206.6" fill="rgba(98,78,228,0.54)" stroke="rgba(98,78,228,0.85)" stroke-width="0.6"/>
<polygon points="416.6,301.6 524.6,227.6 505.9,204.2 397.9,278.2" fill="rgba(98,78,228,0.54)" stroke="rgba(98,78,228,0.85)" stroke-width="0.6"/>
<polygon points="416.6,301.6 524.6,227.6 524.6,213.6 416.6,287.6" fill="rgba(98,78,228,0.54)" stroke="rgba(98,78,228,0.85)" stroke-width="0.6"/>
<polygon points="416.6,301.6 524.6,227.6 524.6,202.6 416.6,276.6" fill="rgba(98,78,228,0.54)" stroke="rgba(98,78,228,0.85)" stroke-width="0.6"/>
<polygon points="459.2,284.2 593.7,437.0 609.9,422.1 475.4,269.3" fill="rgba(98,78,228,0.54)" stroke="rgba(98,78,228,0.85)" stroke-width="0.6"/>
<polygon points="459.2,284.2 593.7,437.0 604.7,426.9 470.2,274.1" fill="rgba(98,78,228,0.54)" stroke="rgba(98,78,228,0.85)" stroke-width="0.6"/>
<polygon points="459.2,284.2 593.7,437.0 593.7,425.0 459.2,272.2" fill="rgba(98,78,228,0.54)" stroke="rgba(98,78,228,0.85)" stroke-width="0.6"/>
<polygon points="459.2,284.2 593.7,437.0 593.7,416.0 459.2,263.2" fill="rgba(98,78,228,0.54)" stroke="rgba(98,78,228,0.85)" stroke-width="0.6"/>
<polygon points="351.2,358.2 459.2,284.2 440.5,260.8 332.5,334.8" fill="rgba(98,78,228,0.54)" stroke="rgba(98,78,228,0.85)" stroke-width="0.6"/>
<polygon points="351.2,358.2 459.2,284.2 459.2,270.2 351.2,344.2" fill="rgba(98,78,228,0.54)" stroke="rgba(98,78,228,0.85)" stroke-width="0.6"/>
<polygon points="351.2,358.2 459.2,284.2 459.2,259.2 351.2,333.2" fill="rgba(98,78,228,0.54)" stroke="rgba(98,78,228,0.85)" stroke-width="0.6"/>
<polygon points="393.8,340.8 528.3,493.6 544.5,478.7 410.0,325.9" fill="rgba(98,78,228,0.54)" stroke="rgba(98,78,228,0.85)" stroke-width="0.6"/>
<polygon points="393.8,340.8 528.3,493.6 539.3,483.5 404.8,330.7" fill="rgba(98,78,228,0.54)" stroke="rgba(98,78,228,0.85)" stroke-width="0.6"/>
<polygon points="393.8,340.8 528.3,493.6 528.3,481.6 393.8,328.8" fill="rgba(98,78,228,0.54)" stroke="rgba(98,78,228,0.85)" stroke-width="0.6"/>
<polygon points="393.8,340.8 528.3,493.6 528.3,472.6 393.8,319.8" fill="rgba(98,78,228,0.54)" stroke="rgba(98,78,228,0.85)" stroke-width="0.6"/>
<polygon points="285.8,414.8 393.8,340.8 375.1,317.4 267.1,391.4" fill="rgba(98,78,228,0.54)" stroke="rgba(98,78,228,0.85)" stroke-width="0.6"/>
<polygon points="285.8,414.8 393.8,340.8 393.8,326.8 285.8,400.8" fill="rgba(98,78,228,0.54)" stroke="rgba(98,78,228,0.85)" stroke-width="0.6"/>
<polygon points="285.8,414.8 393.8,340.8 393.8,315.8 285.8,389.8" fill="rgba(98,78,228,0.54)" stroke="rgba(98,78,228,0.85)" stroke-width="0.6"/>
<polygon points="328.4,397.4 462.9,550.2 479.1,535.3 344.6,382.5" fill="rgba(98,78,228,0.54)" stroke="rgba(98,78,228,0.85)" stroke-width="0.6"/>
<polygon points="328.4,397.4 462.9,550.2 473.9,540.1 339.4,387.3" fill="rgba(98,78,228,0.54)" stroke="rgba(98,78,228,0.85)" stroke-width="0.6"/>
<polygon points="328.4,397.4 462.9,550.2 462.9,538.2 328.4,385.4" fill="rgba(98,78,228,0.54)" stroke="rgba(98,78,228,0.85)" stroke-width="0.6"/>
<polygon points="328.4,397.4 462.9,550.2 462.9,529.2 328.4,376.4" fill="rgba(98,78,228,0.54)" stroke="rgba(98,78,228,0.85)" stroke-width="0.6"/>
<polygon points="220.4,471.4 328.4,397.4 309.7,374.0 201.7,448.0" fill="rgba(98,78,228,0.54)" stroke="rgba(98,78,228,0.85)" stroke-width="0.6"/>
<polygon points="220.4,471.4 328.4,397.4 328.4,383.4 220.4,457.4" fill="rgba(98,78,228,0.54)" stroke="rgba(98,78,228,0.85)" stroke-width="0.6"/>
<polygon points="220.4,471.4 328.4,397.4 328.4,372.4 220.4,446.4" fill="rgba(98,78,228,0.54)" stroke="rgba(98,78,228,0.85)" stroke-width="0.6"/>
<polygon points="263.0,454.0 397.5,606.8 410.5,594.8 276.0,442.0" fill="rgba(98,78,228,0.54)" stroke="rgba(98,78,228,0.85)" stroke-width="0.6"/>
<polygon points="263.0,454.0 397.5,606.8 397.5,595.8 263.0,443.0" fill="rgba(98,78,228,0.54)" stroke="rgba(98,78,228,0.85)" stroke-width="0.6"/>
<polygon points="155.0,528.0 263.0,454.0 244.3,430.6 136.3,504.6" fill="rgba(98,78,228,0.54)" stroke="rgba(98,78,228,0.85)" stroke-width="0.6"/>
<polygon points="155.0,528.0 263.0,454.0 263.0,440.0 155.0,514.0" fill="rgba(98,78,228,0.54)" stroke="rgba(98,78,228,0.85)" stroke-width="0.6"/>
<polygon points="155.0,528.0 263.0,454.0 263.0,429.0 155.0,503.0" fill="rgba(98,78,228,0.54)" stroke="rgba(98,78,228,0.85)" stroke-width="0.6"/>
<text x="605.7" y="184.3" transform="rotate(48.6 605.7 184.3)" font-size="9.5" fill="#111" text-anchor="start">0,20 [kN/m]</text>
<text x="618.0" y="181.6" transform="rotate(48.6 618.0 181.6)" font-size="9.5" fill="#111" text-anchor="start" opacity="0.25">0,15 [kN/m]</text>
<text x="663.5" y="250.0" transform="rotate(48.6 663.5 250.0)" font-size="9.5" fill="#111" text-anchor="start">0,20 [kN/m]</text>
<text x="671.8" y="242.7" transform="rotate(48.6 671.8 242.7)" font-size="9.5" fill="#111" text-anchor="start" opacity="0.3">0,15 [kN/m]</text>
<text x="667.9" y="274.6" transform="rotate(32.6 667.9 274.6)" font-size="9.5" fill="#111" text-anchor="start">0,4</text>
<text x="699.1" y="291.9" transform="rotate(42.6 699.1 291.9)" font-size="9.5" fill="#111" text-anchor="start">0,15 [kN/m]</text>
<text x="700.6" y="290.6" transform="rotate(45.6 700.6 290.6)" font-size="9.5" fill="#111" text-anchor="start">0,20 [kN/m]</text>
<text x="704.8" y="292.3" transform="rotate(48.6 704.8 292.3)" font-size="9.5" fill="#111" text-anchor="start">0,08 [kN/m]</text>
<text x="705.2" y="297.4" transform="rotate(51.6 705.2 297.4)" font-size="9.5" fill="#111" text-anchor="start">0,40 [kN/m]</text>
<text x="709.4" y="299.1" transform="rotate(54.6 709.4 299.1)" font-size="9.5" fill="#111" text-anchor="start">0,20 [kN/m]</text>
<text x="703.0" y="285.8" transform="rotate(57.6 703.0 285.8)" font-size="9.5" fill="#111" text-anchor="start">0,20 [kN/m]</text>
<text x="709.9" y="290.6" transform="rotate(60.6 709.9 290.6)" font-size="9.5" fill="#111" text-anchor="start">0,08 [kN/m]</text>
<text x="523.5" y="212.9" transform="rotate(-34.4 523.5 212.9)" font-size="9.5" fill="#111" text-anchor="start">0,20 [kN/m]</text>
<text x="509.1" y="205.8" transform="rotate(-34.4 509.1 205.8)" font-size="9.5" fill="#111" text-anchor="start" opacity="0.6">0,15 [kN/m]</text>
<text x="478.1" y="244.0" transform="rotate(-38.4 478.1 244.0)" font-size="9.5" fill="#111" text-anchor="start">0,08</text>
<text x="478.6" y="240.1" transform="rotate(-36.4 478.6 240.1)" font-size="9.5" fill="#111" text-anchor="start">0,20</text>
<text x="477.4" y="236.0" transform="rotate(-34.4 477.4 236.0)" font-size="9.5" fill="#111" text-anchor="start">0,15</text>
<text x="477.1" y="247.1" transform="rotate(-32.4 477.1 247.1)" font-size="9.5" fill="#111" text-anchor="start">0,08 [kN/m]</text>
<text x="479.7" y="241.7" transform="rotate(-30.4 479.7 241.7)" font-size="9.5" fill="#111" text-anchor="start">0,20 [kN/m]</text>
<text x="457.7" y="260.5" transform="rotate(-34.4 457.7 260.5)" font-size="9.5" fill="#111" text-anchor="start">0,08</text>
<text x="465.6" y="248.9" transform="rotate(-38.4 465.6 248.9)" font-size="9.5" fill="#111" text-anchor="start">0,15</text>
<text x="549.5" y="152.1" transform="rotate(15.1 549.5 152.1)" font-size="9.5" fill="#111" text-anchor="middle">0,32 [kN/m]</text>
<text x="497.5" y="218.4" transform="rotate(15.1 497.5 218.4)" font-size="9.5" fill="#111" text-anchor="middle">0,32 [kN/m]</text>
<text x="540.3" y="240.9" transform="rotate(48.6 540.3 240.9)" font-size="9.5" fill="#111" text-anchor="start">0,20 [kN/m]</text>
<text x="552.6" y="238.2" transform="rotate(48.6 552.6 238.2)" font-size="9.5" fill="#111" text-anchor="start" opacity="0.25">0,15 [kN/m]</text>
<text x="598.1" y="306.6" transform="rotate(48.6 598.1 306.6)" font-size="9.5" fill="#111" text-anchor="start">0,20 [kN/m]</text>
<text x="606.4" y="299.3" transform="rotate(48.6 606.4 299.3)" font-size="9.5" fill="#111" text-anchor="start" opacity="0.3">0,15 [kN/m]</text>
<text x="602.5" y="331.2" transform="rotate(32.6 602.5 331.2)" font-size="9.5" fill="#111" text-anchor="start">0,4</text>
<text x="633.7" y="348.5" transform="rotate(42.6 633.7 348.5)" font-size="9.5" fill="#111" text-anchor="start">0,15 [kN/m]</text>
<text x="635.2" y="347.2" transform="rotate(45.6 635.2 347.2)" font-size="9.5" fill="#111" text-anchor="start">0,20 [kN/m]</text>
<text x="639.4" y="348.9" transform="rotate(48.6 639.4 348.9)" font-size="9.5" fill="#111" text-anchor="start">0,08 [kN/m]</text>
<text x="639.8" y="354.0" transform="rotate(51.6 639.8 354.0)" font-size="9.5" fill="#111" text-anchor="start">0,40 [kN/m]</text>
<text x="644.0" y="355.7" transform="rotate(54.6 644.0 355.7)" font-size="9.5" fill="#111" text-anchor="start">0,20 [kN/m]</text>
<text x="637.6" y="342.4" transform="rotate(57.6 637.6 342.4)" font-size="9.5" fill="#111" text-anchor="start">0,20 [kN/m]</text>
<text x="644.5" y="347.2" transform="rotate(60.6 644.5 347.2)" font-size="9.5" fill="#111" text-anchor="start">0,08 [kN/m]</text>
<text x="458.1" y="269.5" transform="rotate(-34.4 458.1 269.5)" font-size="9.5" fill="#111" text-anchor="start">0,20 [kN/m]</text>
<text x="443.7" y="262.4" transform="rotate(-34.4 443.7 262.4)" font-size="9.5" fill="#111" text-anchor="start" opacity="0.6">0,15 [kN/m]</text>
<text x="412.7" y="300.6" transform="rotate(-38.4 412.7 300.6)" font-size="9.5" fill="#111" text-anchor="start">0,08</text>
<text x="413.2" y="296.7" transform="rotate(-36.4 413.2 296.7)" font-size="9.5" fill="#111" text-anchor="start">0,20</text>
<text x="412.0" y="292.6" transform="rotate(-34.4 412.0 292.6)" font-size="9.5" fill="#111" text-anchor="start">0,15</text>
<text x="411.7" y="303.7" transform="rotate(-32.4 411.7 303.7)" font-size="9.5" fill="#111" text-anchor="start">0,08 [kN/m]</text>
<text x="414.3" y="298.3" transform="rotate(-30.4 414.3 298.3)" font-size="9.5" fill="#111" text-anchor="start">0,20 [kN/m]</text>
<text x="392.3" y="317.1" transform="rotate(-34.4 392.3 317.1)" font-size="9.5" fill="#111" text-anchor="start">0,08</text>
<text x="400.2" y="305.5" transform="rotate(-38.4 400.2 305.5)" font-size="9.5" fill="#111" text-anchor="start">0,15</text>
<text x="432.1" y="275.0" transform="rotate(15.1 432.1 275.0)" font-size="9.5" fill="#111" text-anchor="middle">0,32 [kN/m]</text>
<text x="474.9" y="297.5" transform="rotate(48.6 474.9 297.5)" font-size="9.5" fill="#111" text-anchor="start">0,20 [kN/m]</text>
<text x="487.2" y="294.8" transform="rotate(48.6 487.2 294.8)" font-size="9.5" fill="#111" text-anchor="start" opacity="0.25">0,15 [kN/m]</text>
<text x="532.7" y="363.2" transform="rotate(48.6 532.7 363.2)" font-size="9.5" fill="#111" text-anchor="start">0,20 [kN/m]</text>
<text x="541.0" y="355.9" transform="rotate(48.6 541.0 355.9)" font-size="9.5" fill="#111" text-anchor="start" opacity="0.3">0,15 [kN/m]</text>
<text x="537.1" y="387.8" transform="rotate(32.6 537.1 387.8)" font-size="9.5" fill="#111" text-anchor="start">0,4</text>
<text x="568.3" y="405.1" transform="rotate(42.6 568.3 405.1)" font-size="9.5" fill="#111" text-anchor="start">0,15 [kN/m]</text>
<text x="569.8" y="403.8" transform="rotate(45.6 569.8 403.8)" font-size="9.5" fill="#111" text-anchor="start">0,20 [kN/m]</text>
<text x="574.0" y="405.5" transform="rotate(48.6 574.0 405.5)" font-size="9.5" fill="#111" text-anchor="start">0,08 [kN/m]</text>
<text x="574.4" y="410.6" transform="rotate(51.6 574.4 410.6)" font-size="9.5" fill="#111" text-anchor="start">0,40 [kN/m]</text>
<text x="578.6" y="412.3" transform="rotate(54.6 578.6 412.3)" font-size="9.5" fill="#111" text-anchor="start">0,20 [kN/m]</text>
<text x="572.2" y="399.0" transform="rotate(57.6 572.2 399.0)" font-size="9.5" fill="#111" text-anchor="start">0,20 [kN/m]</text>
<text x="579.1" y="403.8" transform="rotate(60.6 579.1 403.8)" font-size="9.5" fill="#111" text-anchor="start">0,08 [kN/m]</text>
<text x="392.7" y="326.1" transform="rotate(-34.4 392.7 326.1)" font-size="9.5" fill="#111" text-anchor="start">0,20 [kN/m]</text>
<text x="378.3" y="319.0" transform="rotate(-34.4 378.3 319.0)" font-size="9.5" fill="#111" text-anchor="start" opacity="0.6">0,15 [kN/m]</text>
<text x="347.3" y="357.2" transform="rotate(-38.4 347.3 357.2)" font-size="9.5" fill="#111" text-anchor="start">0,08</text>
<text x="347.8" y="353.3" transform="rotate(-36.4 347.8 353.3)" font-size="9.5" fill="#111" text-anchor="start">0,20</text>
<text x="346.6" y="349.2" transform="rotate(-34.4 346.6 349.2)" font-size="9.5" fill="#111" text-anchor="start">0,15</text>
<text x="346.3" y="360.3" transform="rotate(-32.4 346.3 360.3)" font-size="9.5" fill="#111" text-anchor="start">0,08 [kN/m]</text>
<text x="348.9" y="354.9" transform="rotate(-30.4 348.9 354.9)" font-size="9.5" fill="#111" text-anchor="start">0,20 [kN/m]</text>
<text x="326.9" y="373.7" transform="rotate(-34.4 326.9 373.7)" font-size="9.5" fill="#111" text-anchor="start">0,08</text>
<text x="334.8" y="362.1" transform="rotate(-38.4 334.8 362.1)" font-size="9.5" fill="#111" text-anchor="start">0,15</text>
<text x="366.7" y="331.6" transform="rotate(15.1 366.7 331.6)" font-size="9.5" fill="#111" text-anchor="middle">0,32 [kN/m]</text>
<text x="409.5" y="354.1" transform="rotate(48.6 409.5 354.1)" font-size="9.5" fill="#111" text-anchor="start">0,20 [kN/m]</text>
<text x="421.8" y="351.4" transform="rotate(48.6 421.8 351.4)" font-size="9.5" fill="#111" text-anchor="start" opacity="0.25">0,15 [kN/m]</text>
<text x="467.3" y="419.8" transform="rotate(48.6 467.3 419.8)" font-size="9.5" fill="#111" text-anchor="start">0,20 [kN/m]</text>
<text x="475.6" y="412.5" transform="rotate(48.6 475.6 412.5)" font-size="9.5" fill="#111" text-anchor="start" opacity="0.3">0,15 [kN/m]</text>
<text x="471.7" y="444.4" transform="rotate(32.6 471.7 444.4)" font-size="9.5" fill="#111" text-anchor="start">0,4</text>
<text x="502.9" y="461.7" transform="rotate(42.6 502.9 461.7)" font-size="9.5" fill="#111" text-anchor="start">0,15 [kN/m]</text>
<text x="504.4" y="460.4" transform="rotate(45.6 504.4 460.4)" font-size="9.5" fill="#111" text-anchor="start">0,20 [kN/m]</text>
<text x="508.6" y="462.1" transform="rotate(48.6 508.6 462.1)" font-size="9.5" fill="#111" text-anchor="start">0,08 [kN/m]</text>
<text x="509.0" y="467.2" transform="rotate(51.6 509.0 467.2)" font-size="9.5" fill="#111" text-anchor="start">0,40 [kN/m]</text>
<text x="513.2" y="468.9" transform="rotate(54.6 513.2 468.9)" font-size="9.5" fill="#111" text-anchor="start">0,20 [kN/m]</text>
<text x="506.8" y="455.6" transform="rotate(57.6 506.8 455.6)" font-size="9.5" fill="#111" text-anchor="start">0,20 [kN/m]</text>
<text x="513.7" y="460.4" transform="rotate(60.6 513.7 460.4)" font-size="9.5" fill="#111" text-anchor="start">0,08 [kN/m]</text>
<text x="327.3" y="382.7" transform="rotate(-34.4 327.3 382.7)" font-size="9.5" fill="#111" text-anchor="start">0,20 [kN/m]</text>
<text x="312.9" y="375.6" transform="rotate(-34.4 312.9 375.6)" font-size="9.5" fill="#111" text-anchor="start" opacity="0.6">0,15 [kN/m]</text>
<text x="281.9" y="413.8" transform="rotate(-38.4 281.9 413.8)" font-size="9.5" fill="#111" text-anchor="start">0,08</text>
<text x="282.4" y="409.9" transform="rotate(-36.4 282.4 409.9)" font-size="9.5" fill="#111" text-anchor="start">0,20</text>
<text x="281.2" y="405.8" transform="rotate(-34.4 281.2 405.8)" font-size="9.5" fill="#111" text-anchor="start">0,15</text>
<text x="280.9" y="416.9" transform="rotate(-32.4 280.9 416.9)" font-size="9.5" fill="#111" text-anchor="start">0,08 [kN/m]</text>
<text x="283.5" y="411.5" transform="rotate(-30.4 283.5 411.5)" font-size="9.5" fill="#111" text-anchor="start">0,20 [kN/m]</text>
<text x="261.5" y="430.3" transform="rotate(-34.4 261.5 430.3)" font-size="9.5" fill="#111" text-anchor="start">0,08</text>
<text x="269.4" y="418.7" transform="rotate(-38.4 269.4 418.7)" font-size="9.5" fill="#111" text-anchor="start">0,15</text>
<text x="301.3" y="388.2" transform="rotate(15.1 301.3 388.2)" font-size="9.5" fill="#111" text-anchor="middle">0,32 [kN/m]</text>
<text x="344.1" y="410.7" transform="rotate(48.6 344.1 410.7)" font-size="9.5" fill="#111" text-anchor="start">0,20 [kN/m]</text>
<text x="356.4" y="408.0" transform="rotate(48.6 356.4 408.0)" font-size="9.5" fill="#111" text-anchor="start" opacity="0.25">0,15 [kN/m]</text>
<text x="401.9" y="476.4" transform="rotate(48.6 401.9 476.4)" font-size="9.5" fill="#111" text-anchor="start">0,20 [kN/m]</text>
<text x="410.2" y="469.1" transform="rotate(48.6 410.2 469.1)" font-size="9.5" fill="#111" text-anchor="start" opacity="0.3">0,15 [kN/m]</text>
<text x="406.3" y="501.0" transform="rotate(32.6 406.3 501.0)" font-size="9.5" fill="#111" text-anchor="start">0,4</text>
<text x="437.5" y="518.3" transform="rotate(42.6 437.5 518.3)" font-size="9.5" fill="#111" text-anchor="start">0,15 [kN/m]</text>
<text x="439.0" y="517.0" transform="rotate(45.6 439.0 517.0)" font-size="9.5" fill="#111" text-anchor="start">0,20 [kN/m]</text>
<text x="443.2" y="518.7" transform="rotate(48.6 443.2 518.7)" font-size="9.5" fill="#111" text-anchor="start">0,08 [kN/m]</text>
<text x="443.6" y="523.8" transform="rotate(51.6 443.6 523.8)" font-size="9.5" fill="#111" text-anchor="start">0,40 [kN/m]</text>
<text x="447.8" y="525.5" transform="rotate(54.6 447.8 525.5)" font-size="9.5" fill="#111" text-anchor="start">0,20 [kN/m]</text>
<text x="441.4" y="512.2" transform="rotate(57.6 441.4 512.2)" font-size="9.5" fill="#111" text-anchor="start">0,20 [kN/m]</text>
<text x="448.3" y="517.0" transform="rotate(60.6 448.3 517.0)" font-size="9.5" fill="#111" text-anchor="start">0,08 [kN/m]</text>
<text x="261.9" y="439.3" transform="rotate(-34.4 261.9 439.3)" font-size="9.5" fill="#111" text-anchor="start">0,20 [kN/m]</text>
<text x="247.5" y="432.2" transform="rotate(-34.4 247.5 432.2)" font-size="9.5" fill="#111" text-anchor="start" opacity="0.6">0,15 [kN/m]</text>
<text x="216.5" y="470.4" transform="rotate(-38.4 216.5 470.4)" font-size="9.5" fill="#111" text-anchor="start">0,08</text>
<text x="217.0" y="466.5" transform="rotate(-36.4 217.0 466.5)" font-size="9.5" fill="#111" text-anchor="start">0,20</text>
<text x="215.8" y="462.4" transform="rotate(-34.4 215.8 462.4)" font-size="9.5" fill="#111" text-anchor="start">0,15</text>
<text x="215.5" y="473.5" transform="rotate(-32.4 215.5 473.5)" font-size="9.5" fill="#111" text-anchor="start">0,08 [kN/m]</text>
<text x="218.1" y="468.1" transform="rotate(-30.4 218.1 468.1)" font-size="9.5" fill="#111" text-anchor="start">0,20 [kN/m]</text>
<text x="196.1" y="486.9" transform="rotate(-34.4 196.1 486.9)" font-size="9.5" fill="#111" text-anchor="start">0,08</text>
<text x="204.0" y="475.3" transform="rotate(-38.4 204.0 475.3)" font-size="9.5" fill="#111" text-anchor="start">0,15</text>
<text x="235.9" y="444.8" transform="rotate(15.1 235.9 444.8)" font-size="9.5" fill="#111" text-anchor="middle">0,32 [kN/m]</text>
<text x="296.6" y="456.8" transform="rotate(16.2 296.6 456.8)" font-size="9.5" fill="#111" text-anchor="middle">0,43 [kN/m]</text>
<text x="350.0" y="529.1" transform="rotate(16.2 350.0 529.1)" font-size="9.5" fill="#111" text-anchor="middle">0,43 [kN/m]</text>
<text x="278.7" y="467.3" transform="rotate(48.6 278.7 467.3)" font-size="9.5" fill="#111" text-anchor="start">0,05 [kN/m]</text>
<text x="291.0" y="464.6" transform="rotate(48.6 291.0 464.6)" font-size="9.5" fill="#111" text-anchor="start" opacity="0.25">0,15 [kN/m]</text>
<text x="336.5" y="533.0" transform="rotate(48.6 336.5 533.0)" font-size="9.5" fill="#111" text-anchor="start">0,15 [kN/m]</text>
<text x="344.8" y="525.7" transform="rotate(48.6 344.8 525.7)" font-size="9.5" fill="#111" text-anchor="start" opacity="0.3">0,15 [kN/m]</text>
<text x="340.9" y="557.6" transform="rotate(32.6 340.9 557.6)" font-size="9.5" fill="#111" text-anchor="start">0,40</text>
<text x="372.9" y="574.3" transform="rotate(48.6 372.9 574.3)" font-size="9.5" fill="#111" text-anchor="start">0,15 [kN/m]</text>
<text x="190.0" y="500.4" transform="rotate(-34.4 190.0 500.4)" font-size="9.5" fill="#111" text-anchor="start">0,15 [kN/m]</text>
<text x="200.0" y="477.8" transform="rotate(-34.4 200.0 477.8)" font-size="9.5" fill="#111" text-anchor="start">0,08</text>
<text x="151.1" y="527.0" transform="rotate(-38.4 151.1 527.0)" font-size="9.5" fill="#111" text-anchor="start">0,08</text>
<text x="151.6" y="523.1" transform="rotate(-36.4 151.6 523.1)" font-size="9.5" fill="#111" text-anchor="start">0,20</text>
<text x="150.4" y="519.0" transform="rotate(-34.4 150.4 519.0)" font-size="9.5" fill="#111" text-anchor="start">0,15</text>
<text x="150.1" y="530.1" transform="rotate(-32.4 150.1 530.1)" font-size="9.5" fill="#111" text-anchor="start">0,08 [kN/m]</text>
<text x="152.7" y="524.7" transform="rotate(-30.4 152.7 524.7)" font-size="9.5" fill="#111" text-anchor="start">0,20 [kN/m]</text>
<text x="130.7" y="543.5" transform="rotate(-34.4 130.7 543.5)" font-size="9.5" fill="#111" text-anchor="start">0,08</text>
<text x="138.6" y="531.9" transform="rotate(-38.4 138.6 531.9)" font-size="9.5" fill="#111" text-anchor="start">0,15</text>
<text x="170.5" y="501.4" transform="rotate(15.1 170.5 501.4)" font-size="9.5" fill="#111" text-anchor="middle">0,32 [kN/m]</text>
<path d="M508.2 227.7L589.2 172.2" stroke="#fff" stroke-width="1.4"/><path d="M509.0 226.5L590.0 171.0" stroke="#8a2fc9" stroke-width="2.2"/>
<path d="M481.2 246.2L508.2 227.7" stroke="#fff" stroke-width="1.4"/><path d="M482.0 245.0L509.0 226.5" stroke="#0a0a0a" stroke-width="2.4"/>
<path d="M589.2 172.2L656.5 248.6" stroke="#fff" stroke-width="1.4"/><path d="M590.0 171.0L657.2 247.4" stroke="#a32a1c" stroke-width="2.2"/>
<path d="M656.5 248.6L696.0 293.5" stroke="#fff" stroke-width="1.4"/><path d="M657.2 247.4L696.8 292.3" stroke="#12f0f2" stroke-width="2.2"/>
<path d="M696.0 293.5L723.7 325.0" stroke="#fff" stroke-width="1.4"/><path d="M696.8 292.3L724.5 323.8" stroke="#e8107a" stroke-width="2.2"/>
<path d="M583.0 179.5L588.0 172.0L593.0 179.5Z" fill="#4648ee"/><path d="M588.0 172.0L593.0 179.5L594.5 177.0Z" fill="#1f22c8"/><path d="M582.0 181.5H593.0" stroke="#b9bdf5" stroke-width="1.2"/><path d="M579.0 173.0V179.0" stroke="#6f7cf0" stroke-width="0.8"/>
<path d="M650.8 257.4L655.8 249.9L660.8 257.4Z" fill="#4648ee"/><path d="M655.8 249.9L660.8 257.4L662.2 254.9Z" fill="#1f22c8"/><path d="M649.8 259.4H660.8" stroke="#b9bdf5" stroke-width="1.2"/><path d="M646.8 250.9V256.9" stroke="#6f7cf0" stroke-width="0.8"/>
<path d="M690.3 302.3L695.3 294.8L700.3 302.3Z" fill="#4648ee"/><path d="M695.3 294.8L700.3 302.3L701.8 299.8Z" fill="#1f22c8"/><path d="M689.3 304.3H700.3" stroke="#b9bdf5" stroke-width="1.2"/><path d="M686.3 295.8V301.8" stroke="#6f7cf0" stroke-width="0.8"/>
<path d="M718.0 333.8L723.0 326.3L728.0 333.8Z" fill="#4648ee"/><path d="M723.0 326.3L728.0 333.8L729.5 331.3Z" fill="#1f22c8"/><path d="M717.0 335.8H728.0" stroke="#b9bdf5" stroke-width="1.2"/><path d="M714.0 327.3V333.3" stroke="#6f7cf0" stroke-width="0.8"/>
<path d="M475.5 255.0L480.5 247.5L485.5 255.0Z" fill="#4648ee"/><path d="M480.5 247.5L485.5 255.0L487.0 252.5Z" fill="#1f22c8"/><path d="M474.5 257.0H485.5" stroke="#b9bdf5" stroke-width="1.2"/><path d="M471.5 248.5V254.5" stroke="#6f7cf0" stroke-width="0.8"/>
<path d="M504.0 238.0L509.0 230.5L514.0 238.0Z" fill="#4648ee"/><path d="M509.0 230.5L514.0 238.0L515.5 235.5Z" fill="#1f22c8"/><path d="M503.0 240.0H514.0" stroke="#b9bdf5" stroke-width="1.2"/><path d="M500.0 231.5V237.5" stroke="#6f7cf0" stroke-width="0.8"/>
<circle cx="655.8" cy="248.2" r="2.1" fill="#fff" stroke="#c4c8fa" stroke-width=".7"/>
<circle cx="695.3" cy="293.1" r="2.1" fill="#fff" stroke="#c4c8fa" stroke-width=".7"/>
<circle cx="723.0" cy="324.6" r="2.1" fill="#fff" stroke="#c4c8fa" stroke-width=".7"/>
<circle cx="480.5" cy="245.8" r="2.1" fill="#fff" stroke="#c4c8fa" stroke-width=".7"/>
<circle cx="507.5" cy="227.3" r="2.1" fill="#fff" stroke="#c4c8fa" stroke-width=".7"/>

<path d="M442.8 284.3L523.8 228.8" stroke="#fff" stroke-width="1.4"/><path d="M443.6 283.1L524.6 227.6" stroke="#8a2fc9" stroke-width="2.2"/>
<path d="M415.8 302.8L442.8 284.3" stroke="#fff" stroke-width="1.4"/><path d="M416.6 301.6L443.6 283.1" stroke="#0a0a0a" stroke-width="2.4"/>
<path d="M523.8 228.8L591.1 305.2" stroke="#fff" stroke-width="1.4"/><path d="M524.6 227.6L591.9 304.0" stroke="#a32a1c" stroke-width="2.2"/>
<path d="M591.1 305.2L630.6 350.1" stroke="#fff" stroke-width="1.4"/><path d="M591.9 304.0L631.4 348.9" stroke="#12f0f2" stroke-width="2.2"/>
<path d="M630.6 350.1L658.3 381.6" stroke="#fff" stroke-width="1.4"/><path d="M631.4 348.9L659.1 380.4" stroke="#e8107a" stroke-width="2.2"/>
<path d="M517.6 236.1L522.6 228.6L527.6 236.1Z" fill="#4648ee"/><path d="M522.6 228.6L527.6 236.1L529.1 233.6Z" fill="#1f22c8"/><path d="M516.6 238.1H527.6" stroke="#b9bdf5" stroke-width="1.2"/><path d="M513.6 229.6V235.6" stroke="#6f7cf0" stroke-width="0.8"/>
<path d="M585.4 314.0L590.4 306.5L595.4 314.0Z" fill="#4648ee"/><path d="M590.4 306.5L595.4 314.0L596.9 311.5Z" fill="#1f22c8"/><path d="M584.4 316.0H595.4" stroke="#b9bdf5" stroke-width="1.2"/><path d="M581.4 307.5V313.5" stroke="#6f7cf0" stroke-width="0.8"/>
<path d="M624.9 358.9L629.9 351.4L634.9 358.9Z" fill="#4648ee"/><path d="M629.9 351.4L634.9 358.9L636.4 356.4Z" fill="#1f22c8"/><path d="M623.9 360.9H634.9" stroke="#b9bdf5" stroke-width="1.2"/><path d="M620.9 352.4V358.4" stroke="#6f7cf0" stroke-width="0.8"/>
<path d="M652.6 390.4L657.6 382.9L662.6 390.4Z" fill="#4648ee"/><path d="M657.6 382.9L662.6 390.4L664.1 387.9Z" fill="#1f22c8"/><path d="M651.6 392.4H662.6" stroke="#b9bdf5" stroke-width="1.2"/><path d="M648.6 383.9V389.9" stroke="#6f7cf0" stroke-width="0.8"/>
<path d="M410.1 311.6L415.1 304.1L420.1 311.6Z" fill="#4648ee"/><path d="M415.1 304.1L420.1 311.6L421.6 309.1Z" fill="#1f22c8"/><path d="M409.1 313.6H420.1" stroke="#b9bdf5" stroke-width="1.2"/><path d="M406.1 305.1V311.1" stroke="#6f7cf0" stroke-width="0.8"/>
<path d="M438.6 294.6L443.6 287.1L448.6 294.6Z" fill="#4648ee"/><path d="M443.6 287.1L448.6 294.6L450.1 292.1Z" fill="#1f22c8"/><path d="M437.6 296.6H448.6" stroke="#b9bdf5" stroke-width="1.2"/><path d="M434.6 288.1V294.1" stroke="#6f7cf0" stroke-width="0.8"/>
<circle cx="590.4" cy="304.8" r="2.1" fill="#fff" stroke="#c4c8fa" stroke-width=".7"/>
<circle cx="629.9" cy="349.7" r="2.1" fill="#fff" stroke="#c4c8fa" stroke-width=".7"/>
<circle cx="657.6" cy="381.2" r="2.1" fill="#fff" stroke="#c4c8fa" stroke-width=".7"/>
<circle cx="415.1" cy="302.4" r="2.1" fill="#fff" stroke="#c4c8fa" stroke-width=".7"/>
<circle cx="442.1" cy="283.9" r="2.1" fill="#fff" stroke="#c4c8fa" stroke-width=".7"/>
<circle cx="515.1" cy="232.4" r="2.1" fill="#fff" stroke="#c4c8fa" stroke-width=".7"/>
<path d="M377.4 340.9L458.4 285.4" stroke="#fff" stroke-width="1.4"/><path d="M378.2 339.7L459.2 284.2" stroke="#8a2fc9" stroke-width="2.2"/>
<path d="M350.4 359.4L377.4 340.9" stroke="#fff" stroke-width="1.4"/><path d="M351.2 358.2L378.2 339.7" stroke="#0a0a0a" stroke-width="2.4"/>
<path d="M458.4 285.4L525.7 361.8" stroke="#fff" stroke-width="1.4"/><path d="M459.2 284.2L526.5 360.6" stroke="#a32a1c" stroke-width="2.2"/>
<path d="M525.7 361.8L565.2 406.7" stroke="#fff" stroke-width="1.4"/><path d="M526.5 360.6L566.0 405.5" stroke="#12f0f2" stroke-width="2.2"/>
<path d="M565.2 406.7L592.9 438.2" stroke="#fff" stroke-width="1.4"/><path d="M566.0 405.5L593.7 437.0" stroke="#e8107a" stroke-width="2.2"/>
<path d="M452.2 292.7L457.2 285.2L462.2 292.7Z" fill="#4648ee"/><path d="M457.2 285.2L462.2 292.7L463.7 290.2Z" fill="#1f22c8"/><path d="M451.2 294.7H462.2" stroke="#b9bdf5" stroke-width="1.2"/><path d="M448.2 286.2V292.2" stroke="#6f7cf0" stroke-width="0.8"/>
<path d="M520.0 370.6L525.0 363.1L530.0 370.6Z" fill="#4648ee"/><path d="M525.0 363.1L530.0 370.6L531.5 368.1Z" fill="#1f22c8"/><path d="M519.0 372.6H530.0" stroke="#b9bdf5" stroke-width="1.2"/><path d="M516.0 364.1V370.1" stroke="#6f7cf0" stroke-width="0.8"/>
<path d="M559.5 415.5L564.5 408.0L569.5 415.5Z" fill="#4648ee"/><path d="M564.5 408.0L569.5 415.5L571.0 413.0Z" fill="#1f22c8"/><path d="M558.5 417.5H569.5" stroke="#b9bdf5" stroke-width="1.2"/><path d="M555.5 409.0V415.0" stroke="#6f7cf0" stroke-width="0.8"/>
<path d="M587.2 447.0L592.2 439.5L597.2 447.0Z" fill="#4648ee"/><path d="M592.2 439.5L597.2 447.0L598.7 444.5Z" fill="#1f22c8"/><path d="M586.2 449.0H597.2" stroke="#b9bdf5" stroke-width="1.2"/><path d="M583.2 440.5V446.5" stroke="#6f7cf0" stroke-width="0.8"/>
<path d="M344.7 368.2L349.7 360.7L354.7 368.2Z" fill="#4648ee"/><path d="M349.7 360.7L354.7 368.2L356.2 365.7Z" fill="#1f22c8"/><path d="M343.7 370.2H354.7" stroke="#b9bdf5" stroke-width="1.2"/><path d="M340.7 361.7V367.7" stroke="#6f7cf0" stroke-width="0.8"/>
<path d="M373.2 351.2L378.2 343.7L383.2 351.2Z" fill="#4648ee"/><path d="M378.2 343.7L383.2 351.2L384.7 348.7Z" fill="#1f22c8"/><path d="M372.2 353.2H383.2" stroke="#b9bdf5" stroke-width="1.2"/><path d="M369.2 344.7V350.7" stroke="#6f7cf0" stroke-width="0.8"/>
<circle cx="525.0" cy="361.4" r="2.1" fill="#fff" stroke="#c4c8fa" stroke-width=".7"/>
<circle cx="564.5" cy="406.3" r="2.1" fill="#fff" stroke="#c4c8fa" stroke-width=".7"/>
<circle cx="592.2" cy="437.8" r="2.1" fill="#fff" stroke="#c4c8fa" stroke-width=".7"/>
<circle cx="349.7" cy="359.0" r="2.1" fill="#fff" stroke="#c4c8fa" stroke-width=".7"/>
<circle cx="376.7" cy="340.5" r="2.1" fill="#fff" stroke="#c4c8fa" stroke-width=".7"/>
<circle cx="449.7" cy="289.0" r="2.1" fill="#fff" stroke="#c4c8fa" stroke-width=".7"/>
<path d="M312.0 397.5L393.0 342.0" stroke="#fff" stroke-width="1.4"/><path d="M312.8 396.3L393.8 340.8" stroke="#8a2fc9" stroke-width="2.2"/>
<path d="M285.0 416.0L312.0 397.5" stroke="#fff" stroke-width="1.4"/><path d="M285.8 414.8L312.8 396.3" stroke="#0a0a0a" stroke-width="2.4"/>
<path d="M393.0 342.0L460.2 418.4" stroke="#fff" stroke-width="1.4"/><path d="M393.8 340.8L461.0 417.2" stroke="#a32a1c" stroke-width="2.2"/>
<path d="M460.2 418.4L499.8 463.3" stroke="#fff" stroke-width="1.4"/><path d="M461.0 417.2L500.6 462.1" stroke="#12f0f2" stroke-width="2.2"/>
<path d="M499.8 463.3L527.5 494.8" stroke="#fff" stroke-width="1.4"/><path d="M500.6 462.1L528.3 493.6" stroke="#e8107a" stroke-width="2.2"/>
<path d="M386.8 349.3L391.8 341.8L396.8 349.3Z" fill="#4648ee"/><path d="M391.8 341.8L396.8 349.3L398.3 346.8Z" fill="#1f22c8"/><path d="M385.8 351.3H396.8" stroke="#b9bdf5" stroke-width="1.2"/><path d="M382.8 342.8V348.8" stroke="#6f7cf0" stroke-width="0.8"/>
<path d="M454.5 427.2L459.5 419.7L464.5 427.2Z" fill="#4648ee"/><path d="M459.5 419.7L464.5 427.2L466.0 424.7Z" fill="#1f22c8"/><path d="M453.5 429.2H464.5" stroke="#b9bdf5" stroke-width="1.2"/><path d="M450.5 420.7V426.7" stroke="#6f7cf0" stroke-width="0.8"/>
<path d="M494.1 472.1L499.1 464.6L504.1 472.1Z" fill="#4648ee"/><path d="M499.1 464.6L504.1 472.1L505.6 469.6Z" fill="#1f22c8"/><path d="M493.1 474.1H504.1" stroke="#b9bdf5" stroke-width="1.2"/><path d="M490.1 465.6V471.6" stroke="#6f7cf0" stroke-width="0.8"/>
<path d="M521.8 503.6L526.8 496.1L531.8 503.6Z" fill="#4648ee"/><path d="M526.8 496.1L531.8 503.6L533.3 501.1Z" fill="#1f22c8"/><path d="M520.8 505.6H531.8" stroke="#b9bdf5" stroke-width="1.2"/><path d="M517.8 497.1V503.1" stroke="#6f7cf0" stroke-width="0.8"/>
<path d="M279.3 424.8L284.3 417.3L289.3 424.8Z" fill="#4648ee"/><path d="M284.3 417.3L289.3 424.8L290.8 422.3Z" fill="#1f22c8"/><path d="M278.3 426.8H289.3" stroke="#b9bdf5" stroke-width="1.2"/><path d="M275.3 418.3V424.3" stroke="#6f7cf0" stroke-width="0.8"/>
<path d="M307.8 407.8L312.8 400.3L317.8 407.8Z" fill="#4648ee"/><path d="M312.8 400.3L317.8 407.8L319.3 405.3Z" fill="#1f22c8"/><path d="M306.8 409.8H317.8" stroke="#b9bdf5" stroke-width="1.2"/><path d="M303.8 401.3V407.3" stroke="#6f7cf0" stroke-width="0.8"/>
<circle cx="459.5" cy="418.0" r="2.1" fill="#fff" stroke="#c4c8fa" stroke-width=".7"/>
<circle cx="499.1" cy="462.9" r="2.1" fill="#fff" stroke="#c4c8fa" stroke-width=".7"/>
<circle cx="526.8" cy="494.4" r="2.1" fill="#fff" stroke="#c4c8fa" stroke-width=".7"/>
<circle cx="284.3" cy="415.6" r="2.1" fill="#fff" stroke="#c4c8fa" stroke-width=".7"/>
<circle cx="311.3" cy="397.1" r="2.1" fill="#fff" stroke="#c4c8fa" stroke-width=".7"/>
<circle cx="384.3" cy="345.6" r="2.1" fill="#fff" stroke="#c4c8fa" stroke-width=".7"/>
<path d="M246.6 454.1L327.6 398.6" stroke="#fff" stroke-width="1.4"/><path d="M247.4 452.9L328.4 397.4" stroke="#8a2fc9" stroke-width="2.2"/>
<path d="M219.6 472.6L246.6 454.1" stroke="#fff" stroke-width="1.4"/><path d="M220.4 471.4L247.4 452.9" stroke="#0a0a0a" stroke-width="2.4"/>
<path d="M327.6 398.6L394.8 475.0" stroke="#fff" stroke-width="1.4"/><path d="M328.4 397.4L395.6 473.8" stroke="#a32a1c" stroke-width="2.2"/>
<path d="M394.8 475.0L434.4 519.9" stroke="#fff" stroke-width="1.4"/><path d="M395.6 473.8L435.2 518.7" stroke="#12f0f2" stroke-width="2.2"/>
<path d="M434.4 519.9L462.1 551.4" stroke="#fff" stroke-width="1.4"/><path d="M435.2 518.7L462.9 550.2" stroke="#e8107a" stroke-width="2.2"/>
<path d="M321.4 405.9L326.4 398.4L331.4 405.9Z" fill="#4648ee"/><path d="M326.4 398.4L331.4 405.9L332.9 403.4Z" fill="#1f22c8"/><path d="M320.4 407.9H331.4" stroke="#b9bdf5" stroke-width="1.2"/><path d="M317.4 399.4V405.4" stroke="#6f7cf0" stroke-width="0.8"/>
<path d="M389.1 483.8L394.1 476.3L399.1 483.8Z" fill="#4648ee"/><path d="M394.1 476.3L399.1 483.8L400.6 481.3Z" fill="#1f22c8"/><path d="M388.1 485.8H399.1" stroke="#b9bdf5" stroke-width="1.2"/><path d="M385.1 477.3V483.3" stroke="#6f7cf0" stroke-width="0.8"/>
<path d="M428.7 528.7L433.7 521.2L438.7 528.7Z" fill="#4648ee"/><path d="M433.7 521.2L438.7 528.7L440.2 526.2Z" fill="#1f22c8"/><path d="M427.7 530.7H438.7" stroke="#b9bdf5" stroke-width="1.2"/><path d="M424.7 522.2V528.2" stroke="#6f7cf0" stroke-width="0.8"/>
<path d="M456.4 560.2L461.4 552.7L466.4 560.2Z" fill="#4648ee"/><path d="M461.4 552.7L466.4 560.2L467.9 557.7Z" fill="#1f22c8"/><path d="M455.4 562.2H466.4" stroke="#b9bdf5" stroke-width="1.2"/><path d="M452.4 553.7V559.7" stroke="#6f7cf0" stroke-width="0.8"/>
<path d="M213.9 481.4L218.9 473.9L223.9 481.4Z" fill="#4648ee"/><path d="M218.9 473.9L223.9 481.4L225.4 478.9Z" fill="#1f22c8"/><path d="M212.9 483.4H223.9" stroke="#b9bdf5" stroke-width="1.2"/><path d="M209.9 474.9V480.9" stroke="#6f7cf0" stroke-width="0.8"/>
<path d="M242.4 464.4L247.4 456.9L252.4 464.4Z" fill="#4648ee"/><path d="M247.4 456.9L252.4 464.4L253.9 461.9Z" fill="#1f22c8"/><path d="M241.4 466.4H252.4" stroke="#b9bdf5" stroke-width="1.2"/><path d="M238.4 457.9V463.9" stroke="#6f7cf0" stroke-width="0.8"/>
<circle cx="394.1" cy="474.6" r="2.1" fill="#fff" stroke="#c4c8fa" stroke-width=".7"/>
<circle cx="433.7" cy="519.5" r="2.1" fill="#fff" stroke="#c4c8fa" stroke-width=".7"/>
<circle cx="461.4" cy="551.0" r="2.1" fill="#fff" stroke="#c4c8fa" stroke-width=".7"/>
<circle cx="218.9" cy="472.2" r="2.1" fill="#fff" stroke="#c4c8fa" stroke-width=".7"/>
<circle cx="245.9" cy="453.7" r="2.1" fill="#fff" stroke="#c4c8fa" stroke-width=".7"/>
<circle cx="318.9" cy="402.2" r="2.1" fill="#fff" stroke="#c4c8fa" stroke-width=".7"/>
<path d="M181.2 510.7L262.2 455.2" stroke="#fff" stroke-width="1.4"/><path d="M182.0 509.5L263.0 454.0" stroke="#8a2fc9" stroke-width="2.2"/>
<path d="M154.2 529.2L181.2 510.7" stroke="#fff" stroke-width="1.4"/><path d="M155.0 528.0L182.0 509.5" stroke="#0a0a0a" stroke-width="2.4"/>
<path d="M262.2 455.2L329.4 531.6" stroke="#fff" stroke-width="1.4"/><path d="M263.0 454.0L330.2 530.4" stroke="#a32a1c" stroke-width="2.2"/>
<path d="M329.4 531.6L369.0 576.5" stroke="#fff" stroke-width="1.4"/><path d="M330.2 530.4L369.8 575.3" stroke="#12f0f2" stroke-width="2.2"/>
<path d="M369.0 576.5L396.7 608.0" stroke="#fff" stroke-width="1.4"/><path d="M369.8 575.3L397.5 606.8" stroke="#e8107a" stroke-width="2.2"/>
<path d="M256.0 462.5L261.0 455.0L266.0 462.5Z" fill="#4648ee"/><path d="M261.0 455.0L266.0 462.5L267.5 460.0Z" fill="#1f22c8"/><path d="M255.0 464.5H266.0" stroke="#b9bdf5" stroke-width="1.2"/><path d="M252.0 456.0V462.0" stroke="#6f7cf0" stroke-width="0.8"/>
<path d="M323.8 540.4L328.8 532.9L333.8 540.4Z" fill="#4648ee"/><path d="M328.8 532.9L333.8 540.4L335.2 537.9Z" fill="#1f22c8"/><path d="M322.8 542.4H333.8" stroke="#b9bdf5" stroke-width="1.2"/><path d="M319.8 533.9V539.9" stroke="#6f7cf0" stroke-width="0.8"/>
<path d="M363.3 585.3L368.3 577.8L373.3 585.3Z" fill="#4648ee"/><path d="M368.3 577.8L373.3 585.3L374.8 582.8Z" fill="#1f22c8"/><path d="M362.3 587.3H373.3" stroke="#b9bdf5" stroke-width="1.2"/><path d="M359.3 578.8V584.8" stroke="#6f7cf0" stroke-width="0.8"/>
<path d="M391.0 616.8L396.0 609.3L401.0 616.8Z" fill="#4648ee"/><path d="M396.0 609.3L401.0 616.8L402.5 614.3Z" fill="#1f22c8"/><path d="M390.0 618.8H401.0" stroke="#b9bdf5" stroke-width="1.2"/><path d="M387.0 610.3V616.3" stroke="#6f7cf0" stroke-width="0.8"/>
<path d="M148.5 538.0L153.5 530.5L158.5 538.0Z" fill="#4648ee"/><path d="M153.5 530.5L158.5 538.0L160.0 535.5Z" fill="#1f22c8"/><path d="M147.5 540.0H158.5" stroke="#b9bdf5" stroke-width="1.2"/><path d="M144.5 531.5V537.5" stroke="#6f7cf0" stroke-width="0.8"/>
<path d="M177.0 521.0L182.0 513.5L187.0 521.0Z" fill="#4648ee"/><path d="M182.0 513.5L187.0 521.0L188.5 518.5Z" fill="#1f22c8"/><path d="M176.0 523.0H187.0" stroke="#b9bdf5" stroke-width="1.2"/><path d="M173.0 514.5V520.5" stroke="#6f7cf0" stroke-width="0.8"/>
<circle cx="328.8" cy="531.2" r="2.1" fill="#fff" stroke="#c4c8fa" stroke-width=".7"/>
<circle cx="368.3" cy="576.1" r="2.1" fill="#fff" stroke="#c4c8fa" stroke-width=".7"/>
<circle cx="396.0" cy="607.6" r="2.1" fill="#fff" stroke="#c4c8fa" stroke-width=".7"/>
<circle cx="153.5" cy="528.8" r="2.1" fill="#fff" stroke="#c4c8fa" stroke-width=".7"/>
<circle cx="180.5" cy="510.3" r="2.1" fill="#fff" stroke="#c4c8fa" stroke-width=".7"/>
<circle cx="253.5" cy="458.8" r="2.1" fill="#fff" stroke="#c4c8fa" stroke-width=".7"/>
<text x="728.5" y="333.8" transform="rotate(0.0 728.5 333.8)" font-size="9" fill="#222" text-anchor="start">2D</text>
<text x="486.0" y="255.0" transform="rotate(0.0 486.0 255.0)" font-size="9" fill="#222" text-anchor="start">2D</text>
<text x="515.0" y="237.5" transform="rotate(0.0 515.0 237.5)" font-size="9" fill="#222" text-anchor="start">2D</text>
<path d="M724.5 326.8V363.8" stroke="#7a66ea" stroke-width="2"/><path d="M720.5 361.8H728.5L724.5 368.8Z" fill="#7a66ea"/>
<text x="728.5" y="378.8" transform="rotate(0.0 728.5 378.8)" font-size="9.5" fill="#111" text-anchor="start">0,06 [kN]</text>
<path d="M482.0 248.0V254.0" stroke="#7a66ea" stroke-width="2"/><path d="M478.0 253.0H486.0L482.0 259.0Z" fill="#7a66ea"/>
<text x="486.5" y="275.0" transform="rotate(0.0 486.5 275.0)" font-size="9.5" fill="#111" text-anchor="start">0,03 [kN]</text>
<text x="663.1" y="390.4" transform="rotate(0.0 663.1 390.4)" font-size="9" fill="#222" text-anchor="start">2D</text>
<text x="420.6" y="311.6" transform="rotate(0.0 420.6 311.6)" font-size="9" fill="#222" text-anchor="start">2D</text>
<text x="449.6" y="294.1" transform="rotate(0.0 449.6 294.1)" font-size="9" fill="#222" text-anchor="start">2D</text>
<path d="M659.1 383.4V420.4" stroke="#7a66ea" stroke-width="2"/><path d="M655.1 418.4H663.1L659.1 425.4Z" fill="#7a66ea"/>
<text x="663.1" y="435.4" transform="rotate(0.0 663.1 435.4)" font-size="9.5" fill="#111" text-anchor="start">0,06 [kN]</text>
<path d="M416.6 304.6V310.6" stroke="#7a66ea" stroke-width="2"/><path d="M412.6 309.6H420.6L416.6 315.6Z" fill="#7a66ea"/>
<text x="421.1" y="331.6" transform="rotate(0.0 421.1 331.6)" font-size="9.5" fill="#111" text-anchor="start">0,03 [kN]</text>
<text x="597.7" y="447.0" transform="rotate(0.0 597.7 447.0)" font-size="9" fill="#222" text-anchor="start">2D</text>
<text x="355.2" y="368.2" transform="rotate(0.0 355.2 368.2)" font-size="9" fill="#222" text-anchor="start">2D</text>
<text x="384.2" y="350.7" transform="rotate(0.0 384.2 350.7)" font-size="9" fill="#222" text-anchor="start">2D</text>
<path d="M593.7 440.0V477.0" stroke="#7a66ea" stroke-width="2"/><path d="M589.7 475.0H597.7L593.7 482.0Z" fill="#7a66ea"/>
<text x="597.7" y="492.0" transform="rotate(0.0 597.7 492.0)" font-size="9.5" fill="#111" text-anchor="start">0,06 [kN]</text>
<path d="M351.2 361.2V367.2" stroke="#7a66ea" stroke-width="2"/><path d="M347.2 366.2H355.2L351.2 372.2Z" fill="#7a66ea"/>
<text x="355.7" y="388.2" transform="rotate(0.0 355.7 388.2)" font-size="9.5" fill="#111" text-anchor="start">0,03 [kN]</text>
<text x="532.3" y="503.6" transform="rotate(0.0 532.3 503.6)" font-size="9" fill="#222" text-anchor="start">2D</text>
<text x="289.8" y="424.8" transform="rotate(0.0 289.8 424.8)" font-size="9" fill="#222" text-anchor="start">2D</text>
<text x="318.8" y="407.3" transform="rotate(0.0 318.8 407.3)" font-size="9" fill="#222" text-anchor="start">2D</text>
<path d="M528.3 496.6V533.6" stroke="#7a66ea" stroke-width="2"/><path d="M524.3 531.6H532.3L528.3 538.6Z" fill="#7a66ea"/>
<text x="532.3" y="548.6" transform="rotate(0.0 532.3 548.6)" font-size="9.5" fill="#111" text-anchor="start">0,06 [kN]</text>
<path d="M285.8 417.8V423.8" stroke="#7a66ea" stroke-width="2"/><path d="M281.8 422.8H289.8L285.8 428.8Z" fill="#7a66ea"/>
<text x="290.3" y="444.8" transform="rotate(0.0 290.3 444.8)" font-size="9.5" fill="#111" text-anchor="start">0,03 [kN]</text>
<text x="466.9" y="560.2" transform="rotate(0.0 466.9 560.2)" font-size="9" fill="#222" text-anchor="start">2D</text>
<text x="224.4" y="481.4" transform="rotate(0.0 224.4 481.4)" font-size="9" fill="#222" text-anchor="start">2D</text>
<text x="253.4" y="463.9" transform="rotate(0.0 253.4 463.9)" font-size="9" fill="#222" text-anchor="start">2D</text>
<path d="M462.9 553.2V590.2" stroke="#7a66ea" stroke-width="2"/><path d="M458.9 588.2H466.9L462.9 595.2Z" fill="#7a66ea"/>
<text x="466.9" y="605.2" transform="rotate(0.0 466.9 605.2)" font-size="9.5" fill="#111" text-anchor="start">0,06 [kN]</text>
<path d="M220.4 474.4V480.4" stroke="#7a66ea" stroke-width="2"/><path d="M216.4 479.4H224.4L220.4 485.4Z" fill="#7a66ea"/>
<text x="224.9" y="501.4" transform="rotate(0.0 224.9 501.4)" font-size="9.5" fill="#111" text-anchor="start">0,03 [kN]</text>
<text x="401.5" y="616.8" transform="rotate(0.0 401.5 616.8)" font-size="9" fill="#222" text-anchor="start">2D</text>
<text x="159.0" y="538.0" transform="rotate(0.0 159.0 538.0)" font-size="9" fill="#222" text-anchor="start">2D</text>
<text x="188.0" y="520.5" transform="rotate(0.0 188.0 520.5)" font-size="9" fill="#222" text-anchor="start">2D</text>
<path d="M397.5 609.8V646.8" stroke="#7a66ea" stroke-width="2"/><path d="M393.5 644.8H401.5L397.5 651.8Z" fill="#7a66ea"/>
<text x="401.5" y="661.8" transform="rotate(0.0 401.5 661.8)" font-size="9.5" fill="#111" text-anchor="start">0,06 [kN]</text>
<path d="M155.0 531.0V537.0" stroke="#7a66ea" stroke-width="2"/><path d="M151.0 536.0H159.0L155.0 542.0Z" fill="#7a66ea"/>
<text x="159.5" y="558.0" transform="rotate(0.0 159.5 558.0)" font-size="9.5" fill="#111" text-anchor="start">0,03 [kN]</text>
<g stroke="#222" stroke-width="1" fill="none"><path d="M54 641.500L66 643.500M54 641.500V653M54 641.500L48.500 646.500"/></g><path d="M66.500 643.600L63 641.800L63.300 644.400Z" fill="#222"/><path d="M54 654L52.500 651H55.500Z" fill="#222"/><path d="M48 647L49 644.500L51 646.500Z" fill="#222"/>
<text x="38.5" y="655.0" transform="rotate(0.0 38.5 655.0)" font-size="9" fill="#444" text-anchor="start">Y</text>
<text x="70.0" y="650.5" transform="rotate(0.0 70.0 650.5)" font-size="9" fill="#444" text-anchor="start">X</text>
<text x="50.5" y="665.0" transform="rotate(0.0 50.5 665.0)" font-size="9" fill="#444" text-anchor="start">Z</text>
</svg>
</div></body></html>
